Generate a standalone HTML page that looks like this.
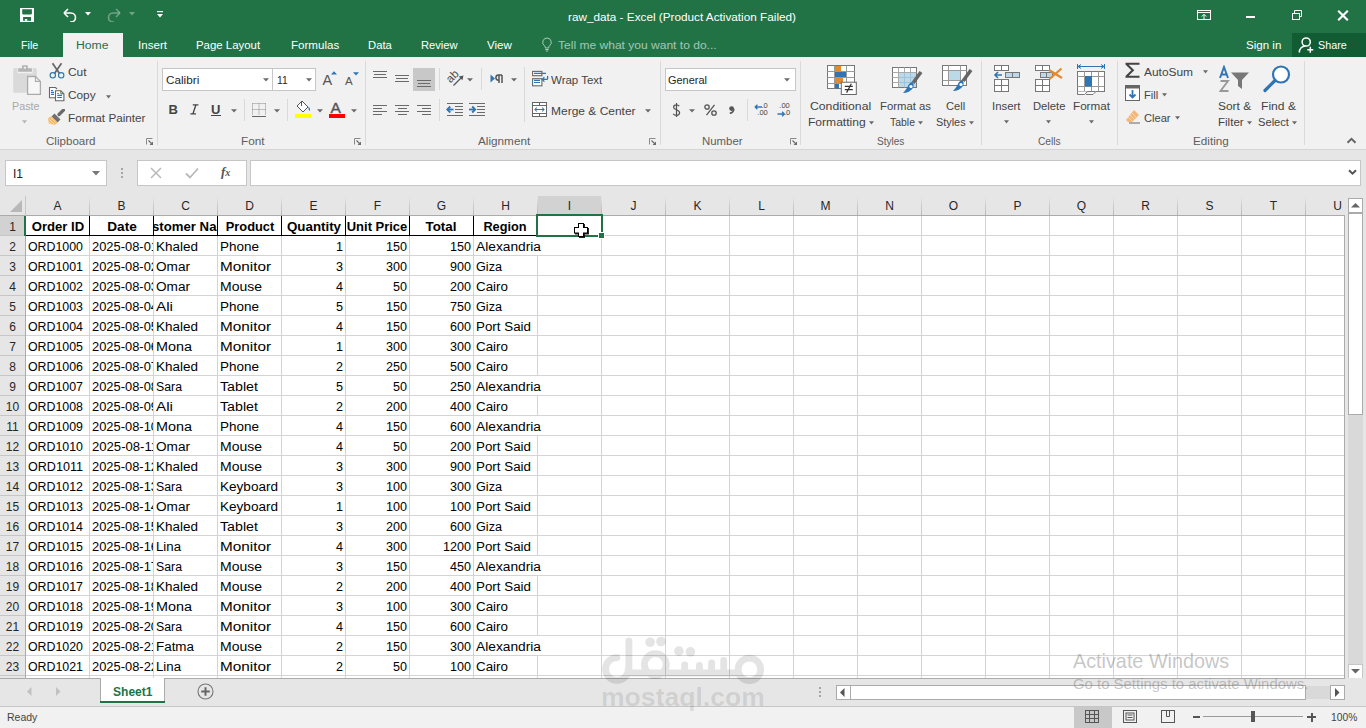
<!DOCTYPE html>
<html><head><meta charset="utf-8"><style>
html,body{margin:0;padding:0;width:1366px;height:728px;overflow:hidden;background:#fff;}
body{position:relative;font-family:"Liberation Sans", sans-serif;}
body>div, body>svg{position:absolute;}
.t{white-space:pre;line-height:1;}
</style></head><body>
<div style="left:0px;top:0px;width:1366px;height:57px;background:#217346"></div>
<svg style="position:absolute;left:20px;top:8px;" width="14" height="14" viewBox="0 0 14 14"><rect x="0" y="0" width="14" height="14" fill="#fff"/><path d="M2.2 1.3h9.7v4.3l-.8.8h-8.1l-.8-.8z" fill="#217346"/><rect x="3.1" y="9" width="7.9" height="3.8" fill="#217346"/><rect x="4.9" y="11" width="2.3" height="1.8" fill="#fff"/></svg>
<svg style="position:absolute;left:62px;top:7px;" width="16" height="15" viewBox="0 0 16 15"><path d="M2 6 L6 2 M2 6 L6 10" stroke="#fff" stroke-width="1.6" fill="none"/><path d="M2.5 6 H9 a4.5 4.5 0 0 1 0 9 h-1" stroke="#fff" stroke-width="1.6" fill="none"/></svg>
<svg style="position:absolute;left:85px;top:12px;" width="7" height="4" viewBox="0 0 7 4"><path d="M0 0h6l-3 3.5z" fill="#fff"/></svg>
<svg style="position:absolute;left:106px;top:7px;" width="16" height="15" viewBox="0 0 16 15"><path d="M14 6 L10 2 M14 6 L10 10" stroke="rgba(255,255,255,.35)" stroke-width="1.6" fill="none"/><path d="M13.5 6 H7 a4.5 4.5 0 0 0 0 9 h1" stroke="rgba(255,255,255,.35)" stroke-width="1.6" fill="none"/></svg>
<svg style="position:absolute;left:129px;top:12px;" width="7" height="4" viewBox="0 0 7 4"><path d="M0 0h6l-3 3.5z" fill="rgba(255,255,255,.35)"/></svg>
<svg style="position:absolute;left:157px;top:11px;" width="7" height="8" viewBox="0 0 7 8"><rect x="0" y="0" width="6" height="1.2" fill="#fff"/><path d="M0 3h6l-3 3.5z" fill="#fff"/></svg>
<div class="t" style="left:567.50px;top:10.65px;font-size:11.75px;color:#fff;font-weight:400;;transform:scaleX(1.0003);transform-origin:left">raw_data - Excel (Product Activation Failed)</div>
<svg style="position:absolute;left:1197px;top:10px;" width="15" height="11" viewBox="0 0 15 11"><rect x="0.5" y="0.5" width="13" height="9" fill="none" stroke="#fff"/><path d="M0.5 2.5h13" stroke="#fff"/><path d="M7 9V4.5 M4.8 6.5 L7 4.3 L9.2 6.5" stroke="#fff" fill="none"/></svg>
<div style="left:1246px;top:16px;width:9px;height:2px;background:#fff"></div>
<svg style="position:absolute;left:1292px;top:10px;" width="11" height="11" viewBox="0 0 11 11"><rect x="0.5" y="3.5" width="7" height="6" fill="none" stroke="#fff"/><path d="M2.5 3.5V0.5h7v6h-2" fill="none" stroke="#fff"/></svg>
<svg style="position:absolute;left:1337px;top:10px;" width="12" height="11" viewBox="0 0 12 11"><path d="M1.2 0.7 L10.8 10.3 M10.8 0.7 L1.2 10.3" stroke="#fff" stroke-width="2.1"/></svg>
<div style="left:63px;top:33px;width:60px;height:24px;background:#f1f1f1"></div>
<div class="t" style="left:20.70px;top:39.30px;font-size:11.7px;color:#fff;font-weight:400;;transform:scaleX(0.9178);transform-origin:left">File</div>
<div class="t" style="left:76.40px;top:39.30px;font-size:11.7px;color:#217346;font-weight:400;;transform:scaleX(1.0443);transform-origin:left">Home</div>
<div class="t" style="left:138.10px;top:39.30px;font-size:11.7px;color:#fff;font-weight:400;;transform:scaleX(0.9911);transform-origin:left">Insert</div>
<div class="t" style="left:196.40px;top:39.30px;font-size:11.7px;color:#fff;font-weight:400;;transform:scaleX(0.9771);transform-origin:left">Page Layout</div>
<div class="t" style="left:290.50px;top:39.30px;font-size:11.7px;color:#fff;font-weight:400;;transform:scaleX(0.9905);transform-origin:left">Formulas</div>
<div class="t" style="left:368.00px;top:39.30px;font-size:11.7px;color:#fff;font-weight:400;;transform:scaleX(0.9627);transform-origin:left">Data</div>
<div class="t" style="left:421.00px;top:39.30px;font-size:11.7px;color:#fff;font-weight:400;;transform:scaleX(0.9557);transform-origin:left">Review</div>
<div class="t" style="left:487.00px;top:39.30px;font-size:11.7px;color:#fff;font-weight:400;;transform:scaleX(0.9889);transform-origin:left">View</div>
<svg style="position:absolute;left:541px;top:37px;" width="12" height="15" viewBox="0 0 12 15"><path d="M6 1a4.3 4.3 0 0 0-2.6 7.7c.6.5.9 1.2.9 2V11h3.4v-.3c0-.8.3-1.5.9-2A4.3 4.3 0 0 0 6 1z" fill="none" stroke="rgba(255,255,255,.6)" stroke-width="1"/><path d="M4.3 12.5h3.4M4.8 14h2.4" stroke="rgba(255,255,255,.6)"/></svg>
<div class="t" style="left:558.00px;top:39.30px;font-size:11.7px;color:rgba(255,255,255,.6);font-weight:400;;transform:scaleX(1.0303);transform-origin:left">Tell me what you want to do...</div>
<div class="t" style="left:1246.00px;top:38.90px;font-size:11.7px;color:#fff;font-weight:400;;transform:scaleX(0.9894);transform-origin:left">Sign in</div>
<div style="left:1292px;top:33px;width:74px;height:24px;background:#125c33"></div>
<svg style="position:absolute;left:1298px;top:36px;" width="17" height="17" viewBox="0 0 17 17"><circle cx="8.2" cy="6" r="4.1" fill="none" stroke="#fff" stroke-width="1.5"/><path d="M1.3 16.5c0-3.8 2.8-6.5 6.3-6.5" fill="none" stroke="#fff" stroke-width="1.5"/><path d="M12.3 10.8v6M9.3 13.8h6" stroke="#fff" stroke-width="1.5"/></svg>
<div class="t" style="left:1318.00px;top:38.90px;font-size:11.7px;color:#fff;font-weight:400;;transform:scaleX(0.9226);transform-origin:left">Share</div>
<div style="left:0px;top:57px;width:1366px;height:92px;background:#f1f1f1"></div>
<div style="left:0px;top:149px;width:1366px;height:1px;background:#d5d5d5"></div>
<div style="left:157px;top:61px;width:1px;height:84px;background:#d9d9d9"></div>
<div style="left:365px;top:61px;width:1px;height:84px;background:#d9d9d9"></div>
<div style="left:660px;top:61px;width:1px;height:84px;background:#d9d9d9"></div>
<div style="left:800px;top:61px;width:1px;height:84px;background:#d9d9d9"></div>
<div style="left:981px;top:61px;width:1px;height:84px;background:#d9d9d9"></div>
<div style="left:1117px;top:61px;width:1px;height:84px;background:#d9d9d9"></div>
<div style="left:1304px;top:61px;width:1px;height:84px;background:#d9d9d9"></div>
<div class="t" style="left:45.60px;top:134.60px;font-size:11.7px;color:#5e5e5e;font-weight:400;;transform:scaleX(0.9905);transform-origin:left">Clipboard</div>
<div class="t" style="left:241.40px;top:134.60px;font-size:11.7px;color:#5e5e5e;font-weight:400;;transform:scaleX(1.0080);transform-origin:left">Font</div>
<div class="t" style="left:478.30px;top:134.60px;font-size:11.7px;color:#5e5e5e;font-weight:400;;transform:scaleX(1.0052);transform-origin:left">Alignment</div>
<div class="t" style="left:702.00px;top:134.60px;font-size:11.7px;color:#5e5e5e;font-weight:400;;transform:scaleX(0.9756);transform-origin:left">Number</div>
<div class="t" style="left:876.80px;top:134.60px;font-size:11.7px;color:#5e5e5e;font-weight:400;;transform:scaleX(0.8600);transform-origin:left">Styles</div>
<div class="t" style="left:1037.60px;top:134.60px;font-size:11.7px;color:#5e5e5e;font-weight:400;;transform:scaleX(0.8728);transform-origin:left">Cells</div>
<div class="t" style="left:1192.50px;top:134.60px;font-size:11.7px;color:#5e5e5e;font-weight:400;;transform:scaleX(1.0034);transform-origin:left">Editing</div>
<svg style="position:absolute;left:146px;top:138px;" width="8" height="8" viewBox="0 0 8 8"><path d="M0.5 6.5V0.5H6.5" fill="none" stroke="#8a8a8a"/><path d="M2.5 2.5L6.5 6.5" stroke="#6a6a6a" stroke-width="1.1"/><path d="M7 3.5V7H3.5z" fill="#6a6a6a"/></svg>
<svg style="position:absolute;left:354px;top:138px;" width="8" height="8" viewBox="0 0 8 8"><path d="M0.5 6.5V0.5H6.5" fill="none" stroke="#8a8a8a"/><path d="M2.5 2.5L6.5 6.5" stroke="#6a6a6a" stroke-width="1.1"/><path d="M7 3.5V7H3.5z" fill="#6a6a6a"/></svg>
<svg style="position:absolute;left:649px;top:138px;" width="8" height="8" viewBox="0 0 8 8"><path d="M0.5 6.5V0.5H6.5" fill="none" stroke="#8a8a8a"/><path d="M2.5 2.5L6.5 6.5" stroke="#6a6a6a" stroke-width="1.1"/><path d="M7 3.5V7H3.5z" fill="#6a6a6a"/></svg>
<svg style="position:absolute;left:790px;top:138px;" width="8" height="8" viewBox="0 0 8 8"><path d="M0.5 6.5V0.5H6.5" fill="none" stroke="#8a8a8a"/><path d="M2.5 2.5L6.5 6.5" stroke="#6a6a6a" stroke-width="1.1"/><path d="M7 3.5V7H3.5z" fill="#6a6a6a"/></svg>
<div style="left:0px;top:150px;width:1366px;height:46px;background:#e6e6e6"></div>
<div style="left:0px;top:196px;width:1345px;height:20px;background:#e6e6e6"></div>
<div style="left:5px;top:160px;width:102px;height:26px;background:#fff;border:1px solid #c6c6c6;box-sizing:border-box"></div>
<div class="t" style="left:13.00px;top:167.84px;font-size:12px;color:#222;font-weight:400;">I1</div>
<svg style="position:absolute;left:92px;top:171px;" width="9" height="5" viewBox="0 0 9 5"><path d="M0 0h8l-4 4.5z" fill="#777"/></svg>
<div style="left:121px;top:168px;width:2px;height:2px;background:#a6a6a6"></div>
<div style="left:121px;top:172px;width:2px;height:2px;background:#a6a6a6"></div>
<div style="left:121px;top:176px;width:2px;height:2px;background:#a6a6a6"></div>
<div style="left:137px;top:160px;width:110px;height:26px;background:#fff;border:1px solid #c6c6c6;box-sizing:border-box"></div>
<svg style="position:absolute;left:150px;top:167px;" width="12" height="12" viewBox="0 0 12 12"><path d="M1 1L11 11M11 1L1 11" stroke="#b9b9b9" stroke-width="1.5"/></svg>
<svg style="position:absolute;left:185px;top:167px;" width="14" height="12" viewBox="0 0 14 12"><path d="M1 6.5L5 10.5L13 1.5" stroke="#b9b9b9" stroke-width="1.8" fill="none"/></svg>
<div class="t" style="left:221px;top:165px;font-size:13px;font-family:'Liberation Serif';font-style:italic;color:#555;font-weight:700">f<span style="font-size:10px">x</span></div>
<div style="left:250px;top:160px;width:1111px;height:26px;background:#fff;border:1px solid #c6c6c6;box-sizing:border-box"></div>
<svg style="position:absolute;left:1348px;top:169px;" width="9" height="7" viewBox="0 0 9 7"><path d="M1 1.2L4.5 4.7L8 1.2" stroke="#555" stroke-width="2" fill="none"/></svg>
<div style="left:0px;top:196px;width:1345px;height:20px;background:#e6e6e6"></div>
<div style="left:0px;top:215px;width:1345px;height:1px;background:#ababab"></div>
<svg style="position:absolute;left:10px;top:200px;" width="13" height="13" viewBox="0 0 13 13"><path d="M12 0V12H0z" fill="#b8b8b8"/></svg>
<div style="left:25px;top:196px;width:1px;height:20px;background:#c6c6c6"></div>
<div style="left:89px;top:196px;width:1px;height:19px;background:linear-gradient(#e6e6e6,#b5b5b5)"></div>
<div class="t" style="left:-242.5px;width:600px;text-align:center;top:199.54px;font-size:12px;color:#262626;font-weight:400;">A</div>
<div style="left:153px;top:196px;width:1px;height:19px;background:linear-gradient(#e6e6e6,#b5b5b5)"></div>
<div class="t" style="left:-178.5px;width:600px;text-align:center;top:199.54px;font-size:12px;color:#262626;font-weight:400;">B</div>
<div style="left:217px;top:196px;width:1px;height:19px;background:linear-gradient(#e6e6e6,#b5b5b5)"></div>
<div class="t" style="left:-114.5px;width:600px;text-align:center;top:199.54px;font-size:12px;color:#262626;font-weight:400;">C</div>
<div style="left:281px;top:196px;width:1px;height:19px;background:linear-gradient(#e6e6e6,#b5b5b5)"></div>
<div class="t" style="left:-50.5px;width:600px;text-align:center;top:199.54px;font-size:12px;color:#262626;font-weight:400;">D</div>
<div style="left:345px;top:196px;width:1px;height:19px;background:linear-gradient(#e6e6e6,#b5b5b5)"></div>
<div class="t" style="left:13.5px;width:600px;text-align:center;top:199.54px;font-size:12px;color:#262626;font-weight:400;">E</div>
<div style="left:409px;top:196px;width:1px;height:19px;background:linear-gradient(#e6e6e6,#b5b5b5)"></div>
<div class="t" style="left:77.5px;width:600px;text-align:center;top:199.54px;font-size:12px;color:#262626;font-weight:400;">F</div>
<div style="left:473px;top:196px;width:1px;height:19px;background:linear-gradient(#e6e6e6,#b5b5b5)"></div>
<div class="t" style="left:141.5px;width:600px;text-align:center;top:199.54px;font-size:12px;color:#262626;font-weight:400;">G</div>
<div style="left:537px;top:196px;width:1px;height:19px;background:linear-gradient(#e6e6e6,#b5b5b5)"></div>
<div class="t" style="left:205.5px;width:600px;text-align:center;top:199.54px;font-size:12px;color:#262626;font-weight:400;">H</div>
<div style="left:538px;top:196px;width:64px;height:19px;background:#d2d2d2"></div>
<div style="left:601px;top:196px;width:1px;height:19px;background:linear-gradient(#e6e6e6,#b5b5b5)"></div>
<div class="t" style="left:269.5px;width:600px;text-align:center;top:199.54px;font-size:12px;color:#262626;font-weight:400;">I</div>
<div style="left:665px;top:196px;width:1px;height:19px;background:linear-gradient(#e6e6e6,#b5b5b5)"></div>
<div class="t" style="left:333.5px;width:600px;text-align:center;top:199.54px;font-size:12px;color:#262626;font-weight:400;">J</div>
<div style="left:729px;top:196px;width:1px;height:19px;background:linear-gradient(#e6e6e6,#b5b5b5)"></div>
<div class="t" style="left:397.5px;width:600px;text-align:center;top:199.54px;font-size:12px;color:#262626;font-weight:400;">K</div>
<div style="left:793px;top:196px;width:1px;height:19px;background:linear-gradient(#e6e6e6,#b5b5b5)"></div>
<div class="t" style="left:461.5px;width:600px;text-align:center;top:199.54px;font-size:12px;color:#262626;font-weight:400;">L</div>
<div style="left:857px;top:196px;width:1px;height:19px;background:linear-gradient(#e6e6e6,#b5b5b5)"></div>
<div class="t" style="left:525.5px;width:600px;text-align:center;top:199.54px;font-size:12px;color:#262626;font-weight:400;">M</div>
<div style="left:921px;top:196px;width:1px;height:19px;background:linear-gradient(#e6e6e6,#b5b5b5)"></div>
<div class="t" style="left:589.5px;width:600px;text-align:center;top:199.54px;font-size:12px;color:#262626;font-weight:400;">N</div>
<div style="left:985px;top:196px;width:1px;height:19px;background:linear-gradient(#e6e6e6,#b5b5b5)"></div>
<div class="t" style="left:653.5px;width:600px;text-align:center;top:199.54px;font-size:12px;color:#262626;font-weight:400;">O</div>
<div style="left:1049px;top:196px;width:1px;height:19px;background:linear-gradient(#e6e6e6,#b5b5b5)"></div>
<div class="t" style="left:717.5px;width:600px;text-align:center;top:199.54px;font-size:12px;color:#262626;font-weight:400;">P</div>
<div style="left:1113px;top:196px;width:1px;height:19px;background:linear-gradient(#e6e6e6,#b5b5b5)"></div>
<div class="t" style="left:781.5px;width:600px;text-align:center;top:199.54px;font-size:12px;color:#262626;font-weight:400;">Q</div>
<div style="left:1177px;top:196px;width:1px;height:19px;background:linear-gradient(#e6e6e6,#b5b5b5)"></div>
<div class="t" style="left:845.5px;width:600px;text-align:center;top:199.54px;font-size:12px;color:#262626;font-weight:400;">R</div>
<div style="left:1241px;top:196px;width:1px;height:19px;background:linear-gradient(#e6e6e6,#b5b5b5)"></div>
<div class="t" style="left:909.5px;width:600px;text-align:center;top:199.54px;font-size:12px;color:#262626;font-weight:400;">S</div>
<div style="left:1305px;top:196px;width:1px;height:19px;background:linear-gradient(#e6e6e6,#b5b5b5)"></div>
<div class="t" style="left:973.5px;width:600px;text-align:center;top:199.54px;font-size:12px;color:#262626;font-weight:400;">T</div>
<div style="left:1369px;top:196px;width:1px;height:19px;background:linear-gradient(#e6e6e6,#b5b5b5)"></div>
<div class="t" style="left:1037.5px;width:600px;text-align:center;top:199.54px;font-size:12px;color:#262626;font-weight:400;">U</div>
<div style="left:0px;top:216px;width:25px;height:462px;background:#e6e6e6"></div>
<div style="left:0px;top:216px;width:25px;height:20px;background:#d2d2d2"></div>
<div style="left:25px;top:216px;width:1px;height:462px;background:#ababab"></div>
<div style="left:0px;top:235px;width:25px;height:1px;background:#c6c6c6"></div>
<div class="t" style="left:-287.5px;width:600px;text-align:center;top:221.14px;font-size:12px;color:#262626;font-weight:400;">1</div>
<div style="left:0px;top:255px;width:25px;height:1px;background:#c6c6c6"></div>
<div class="t" style="left:-287.5px;width:600px;text-align:center;top:241.14px;font-size:12px;color:#262626;font-weight:400;">2</div>
<div style="left:0px;top:275px;width:25px;height:1px;background:#c6c6c6"></div>
<div class="t" style="left:-287.5px;width:600px;text-align:center;top:261.14px;font-size:12px;color:#262626;font-weight:400;">3</div>
<div style="left:0px;top:295px;width:25px;height:1px;background:#c6c6c6"></div>
<div class="t" style="left:-287.5px;width:600px;text-align:center;top:281.14px;font-size:12px;color:#262626;font-weight:400;">4</div>
<div style="left:0px;top:315px;width:25px;height:1px;background:#c6c6c6"></div>
<div class="t" style="left:-287.5px;width:600px;text-align:center;top:301.14px;font-size:12px;color:#262626;font-weight:400;">5</div>
<div style="left:0px;top:335px;width:25px;height:1px;background:#c6c6c6"></div>
<div class="t" style="left:-287.5px;width:600px;text-align:center;top:321.14px;font-size:12px;color:#262626;font-weight:400;">6</div>
<div style="left:0px;top:355px;width:25px;height:1px;background:#c6c6c6"></div>
<div class="t" style="left:-287.5px;width:600px;text-align:center;top:341.14px;font-size:12px;color:#262626;font-weight:400;">7</div>
<div style="left:0px;top:375px;width:25px;height:1px;background:#c6c6c6"></div>
<div class="t" style="left:-287.5px;width:600px;text-align:center;top:361.14px;font-size:12px;color:#262626;font-weight:400;">8</div>
<div style="left:0px;top:395px;width:25px;height:1px;background:#c6c6c6"></div>
<div class="t" style="left:-287.5px;width:600px;text-align:center;top:381.14px;font-size:12px;color:#262626;font-weight:400;">9</div>
<div style="left:0px;top:415px;width:25px;height:1px;background:#c6c6c6"></div>
<div class="t" style="left:-287.5px;width:600px;text-align:center;top:401.14px;font-size:12px;color:#262626;font-weight:400;">10</div>
<div style="left:0px;top:435px;width:25px;height:1px;background:#c6c6c6"></div>
<div class="t" style="left:-287.5px;width:600px;text-align:center;top:421.14px;font-size:12px;color:#262626;font-weight:400;">11</div>
<div style="left:0px;top:455px;width:25px;height:1px;background:#c6c6c6"></div>
<div class="t" style="left:-287.5px;width:600px;text-align:center;top:441.14px;font-size:12px;color:#262626;font-weight:400;">12</div>
<div style="left:0px;top:475px;width:25px;height:1px;background:#c6c6c6"></div>
<div class="t" style="left:-287.5px;width:600px;text-align:center;top:461.14px;font-size:12px;color:#262626;font-weight:400;">13</div>
<div style="left:0px;top:495px;width:25px;height:1px;background:#c6c6c6"></div>
<div class="t" style="left:-287.5px;width:600px;text-align:center;top:481.14px;font-size:12px;color:#262626;font-weight:400;">14</div>
<div style="left:0px;top:515px;width:25px;height:1px;background:#c6c6c6"></div>
<div class="t" style="left:-287.5px;width:600px;text-align:center;top:501.14px;font-size:12px;color:#262626;font-weight:400;">15</div>
<div style="left:0px;top:535px;width:25px;height:1px;background:#c6c6c6"></div>
<div class="t" style="left:-287.5px;width:600px;text-align:center;top:521.14px;font-size:12px;color:#262626;font-weight:400;">16</div>
<div style="left:0px;top:555px;width:25px;height:1px;background:#c6c6c6"></div>
<div class="t" style="left:-287.5px;width:600px;text-align:center;top:541.14px;font-size:12px;color:#262626;font-weight:400;">17</div>
<div style="left:0px;top:575px;width:25px;height:1px;background:#c6c6c6"></div>
<div class="t" style="left:-287.5px;width:600px;text-align:center;top:561.14px;font-size:12px;color:#262626;font-weight:400;">18</div>
<div style="left:0px;top:595px;width:25px;height:1px;background:#c6c6c6"></div>
<div class="t" style="left:-287.5px;width:600px;text-align:center;top:581.14px;font-size:12px;color:#262626;font-weight:400;">19</div>
<div style="left:0px;top:615px;width:25px;height:1px;background:#c6c6c6"></div>
<div class="t" style="left:-287.5px;width:600px;text-align:center;top:601.14px;font-size:12px;color:#262626;font-weight:400;">20</div>
<div style="left:0px;top:635px;width:25px;height:1px;background:#c6c6c6"></div>
<div class="t" style="left:-287.5px;width:600px;text-align:center;top:621.14px;font-size:12px;color:#262626;font-weight:400;">21</div>
<div style="left:0px;top:655px;width:25px;height:1px;background:#c6c6c6"></div>
<div class="t" style="left:-287.5px;width:600px;text-align:center;top:641.14px;font-size:12px;color:#262626;font-weight:400;">22</div>
<div style="left:0px;top:675px;width:25px;height:1px;background:#c6c6c6"></div>
<div class="t" style="left:-287.5px;width:600px;text-align:center;top:661.14px;font-size:12px;color:#262626;font-weight:400;">23</div>
<div style="left:0px;top:695px;width:25px;height:1px;background:#c6c6c6"></div>
<div style="left:26px;top:216px;width:1319px;height:462px;background:#fff"></div>
<div style="left:89px;top:216px;width:1px;height:462px;background:#d4d4d4"></div>
<div style="left:153px;top:216px;width:1px;height:462px;background:#d4d4d4"></div>
<div style="left:217px;top:216px;width:1px;height:462px;background:#d4d4d4"></div>
<div style="left:281px;top:216px;width:1px;height:462px;background:#d4d4d4"></div>
<div style="left:345px;top:216px;width:1px;height:462px;background:#d4d4d4"></div>
<div style="left:409px;top:216px;width:1px;height:462px;background:#d4d4d4"></div>
<div style="left:473px;top:216px;width:1px;height:462px;background:#d4d4d4"></div>
<div style="left:537px;top:216px;width:1px;height:462px;background:#d4d4d4"></div>
<div style="left:601px;top:216px;width:1px;height:462px;background:#d4d4d4"></div>
<div style="left:665px;top:216px;width:1px;height:462px;background:#d4d4d4"></div>
<div style="left:729px;top:216px;width:1px;height:462px;background:#d4d4d4"></div>
<div style="left:793px;top:216px;width:1px;height:462px;background:#d4d4d4"></div>
<div style="left:857px;top:216px;width:1px;height:462px;background:#d4d4d4"></div>
<div style="left:921px;top:216px;width:1px;height:462px;background:#d4d4d4"></div>
<div style="left:985px;top:216px;width:1px;height:462px;background:#d4d4d4"></div>
<div style="left:1049px;top:216px;width:1px;height:462px;background:#d4d4d4"></div>
<div style="left:1113px;top:216px;width:1px;height:462px;background:#d4d4d4"></div>
<div style="left:1177px;top:216px;width:1px;height:462px;background:#d4d4d4"></div>
<div style="left:1241px;top:216px;width:1px;height:462px;background:#d4d4d4"></div>
<div style="left:1305px;top:216px;width:1px;height:462px;background:#d4d4d4"></div>
<div style="left:26px;top:235px;width:1319px;height:1px;background:#d4d4d4"></div>
<div style="left:26px;top:255px;width:1319px;height:1px;background:#d4d4d4"></div>
<div style="left:26px;top:275px;width:1319px;height:1px;background:#d4d4d4"></div>
<div style="left:26px;top:295px;width:1319px;height:1px;background:#d4d4d4"></div>
<div style="left:26px;top:315px;width:1319px;height:1px;background:#d4d4d4"></div>
<div style="left:26px;top:335px;width:1319px;height:1px;background:#d4d4d4"></div>
<div style="left:26px;top:355px;width:1319px;height:1px;background:#d4d4d4"></div>
<div style="left:26px;top:375px;width:1319px;height:1px;background:#d4d4d4"></div>
<div style="left:26px;top:395px;width:1319px;height:1px;background:#d4d4d4"></div>
<div style="left:26px;top:415px;width:1319px;height:1px;background:#d4d4d4"></div>
<div style="left:26px;top:435px;width:1319px;height:1px;background:#d4d4d4"></div>
<div style="left:26px;top:455px;width:1319px;height:1px;background:#d4d4d4"></div>
<div style="left:26px;top:475px;width:1319px;height:1px;background:#d4d4d4"></div>
<div style="left:26px;top:495px;width:1319px;height:1px;background:#d4d4d4"></div>
<div style="left:26px;top:515px;width:1319px;height:1px;background:#d4d4d4"></div>
<div style="left:26px;top:535px;width:1319px;height:1px;background:#d4d4d4"></div>
<div style="left:26px;top:555px;width:1319px;height:1px;background:#d4d4d4"></div>
<div style="left:26px;top:575px;width:1319px;height:1px;background:#d4d4d4"></div>
<div style="left:26px;top:595px;width:1319px;height:1px;background:#d4d4d4"></div>
<div style="left:26px;top:615px;width:1319px;height:1px;background:#d4d4d4"></div>
<div style="left:26px;top:635px;width:1319px;height:1px;background:#d4d4d4"></div>
<div style="left:26px;top:655px;width:1319px;height:1px;background:#d4d4d4"></div>
<div style="left:26px;top:675px;width:1319px;height:1px;background:#d4d4d4"></div>
<div style="position:absolute;left:26px;top:216px;width:63px;height:19px;overflow:hidden;"><div class="t" style="position:absolute;left:-117.75px;width:300px;text-align:center;top:4.30px;font-size:13px;color:#000;font-weight:700;transform:scaleX(1.0094)">Order ID</div></div>
<div style="position:absolute;left:90px;top:216px;width:63px;height:19px;overflow:hidden;"><div class="t" style="position:absolute;left:-118.5px;width:300px;text-align:center;top:4.30px;font-size:13px;color:#000;font-weight:700;transform:scaleX(1.0469)">Date</div></div>
<div style="position:absolute;left:154px;top:216px;width:63px;height:19px;overflow:hidden;"><div class="t" style="position:absolute;left:-118.69999999999999px;width:300px;text-align:center;top:4.30px;font-size:13px;color:#000;font-weight:700;transform:scaleX(1.0131)">Customer Name</div></div>
<div style="position:absolute;left:218px;top:216px;width:63px;height:19px;overflow:hidden;"><div class="t" style="position:absolute;left:-117.80000000000001px;width:300px;text-align:center;top:4.30px;font-size:13px;color:#000;font-weight:700;transform:scaleX(0.9875)">Product</div></div>
<div style="position:absolute;left:282px;top:216px;width:63px;height:19px;overflow:hidden;"><div class="t" style="position:absolute;left:-117.89999999999998px;width:300px;text-align:center;top:4.30px;font-size:13px;color:#000;font-weight:700;transform:scaleX(1.0242)">Quantity</div></div>
<div style="position:absolute;left:346px;top:216px;width:63px;height:19px;overflow:hidden;"><div class="t" style="position:absolute;left:-118.80000000000001px;width:300px;text-align:center;top:4.30px;font-size:13px;color:#000;font-weight:700;transform:scaleX(0.9970)">Unit Price</div></div>
<div style="position:absolute;left:410px;top:216px;width:63px;height:19px;overflow:hidden;"><div class="t" style="position:absolute;left:-118.80000000000001px;width:300px;text-align:center;top:4.30px;font-size:13px;color:#000;font-weight:700;transform:scaleX(1.0303)">Total</div></div>
<div style="position:absolute;left:474px;top:216px;width:63px;height:19px;overflow:hidden;"><div class="t" style="position:absolute;left:-118.60000000000002px;width:300px;text-align:center;top:4.30px;font-size:13px;color:#000;font-weight:700;transform:scaleX(0.9806)">Region</div></div>
<div style="left:25px;top:216px;width:1px;height:20px;background:#000"></div>
<div style="left:89px;top:216px;width:1px;height:20px;background:#000"></div>
<div style="left:153px;top:216px;width:1px;height:20px;background:#000"></div>
<div style="left:217px;top:216px;width:1px;height:20px;background:#000"></div>
<div style="left:281px;top:216px;width:1px;height:20px;background:#000"></div>
<div style="left:345px;top:216px;width:1px;height:20px;background:#000"></div>
<div style="left:409px;top:216px;width:1px;height:20px;background:#000"></div>
<div style="left:473px;top:216px;width:1px;height:20px;background:#000"></div>
<div style="left:537px;top:216px;width:1px;height:20px;background:#000"></div>
<div style="left:26px;top:235px;width:511px;height:1px;background:#000"></div>
<div class="t" style="left:28.00px;top:240.72px;font-size:12.5px;color:#000;font-weight:400;transform:scaleX(0.9895);transform-origin:left">ORD1000</div>
<div style="position:absolute;left:90px;top:236px;width:63px;height:19px;overflow:hidden;"><div class="t" style="position:absolute;left:2.3px;top:4.72px;font-size:12.5px;color:#000;transform:scaleX(1.0322);transform-origin:left">2025-08-01</div></div>
<div class="t" style="left:156.00px;top:240.72px;font-size:12.5px;color:#000;font-weight:400;transform:scaleX(1.0791);transform-origin:left">Khaled</div>
<div class="t" style="left:220.00px;top:240.72px;font-size:12.5px;color:#000;font-weight:400;transform:scaleX(1.0790);transform-origin:left">Phone</div>
<div class="t" style="left:-257px;width:600px;text-align:right;top:240.72px;font-size:12.5px;color:#000;font-weight:400;transform:scaleX(1.0069);transform-origin:right">1</div>
<div class="t" style="left:-193px;width:600px;text-align:right;top:240.72px;font-size:12.5px;color:#000;font-weight:400;transform:scaleX(1.0069);transform-origin:right">150</div>
<div class="t" style="left:-129px;width:600px;text-align:right;top:240.72px;font-size:12.5px;color:#000;font-weight:400;transform:scaleX(1.0069);transform-origin:right">150</div>
<div style="left:537px;top:236px;width:1px;height:19px;background:#fff"></div>
<div class="t" style="left:476.00px;top:240.72px;font-size:12.5px;color:#000;font-weight:400;transform:scaleX(1.1005);transform-origin:left">Alexandria</div>
<div class="t" style="left:28.00px;top:260.72px;font-size:12.5px;color:#000;font-weight:400;transform:scaleX(0.9895);transform-origin:left">ORD1001</div>
<div style="position:absolute;left:90px;top:256px;width:63px;height:19px;overflow:hidden;"><div class="t" style="position:absolute;left:2.3px;top:4.72px;font-size:12.5px;color:#000;transform:scaleX(1.0322);transform-origin:left">2025-08-02</div></div>
<div class="t" style="left:156.00px;top:260.72px;font-size:12.5px;color:#000;font-weight:400;transform:scaleX(1.0880);transform-origin:left">Omar</div>
<div class="t" style="left:220.00px;top:260.72px;font-size:12.5px;color:#000;font-weight:400;transform:scaleX(1.2236);transform-origin:left">Monitor</div>
<div class="t" style="left:-257px;width:600px;text-align:right;top:260.72px;font-size:12.5px;color:#000;font-weight:400;transform:scaleX(1.0069);transform-origin:right">3</div>
<div class="t" style="left:-193px;width:600px;text-align:right;top:260.72px;font-size:12.5px;color:#000;font-weight:400;transform:scaleX(1.0069);transform-origin:right">300</div>
<div class="t" style="left:-129px;width:600px;text-align:right;top:260.72px;font-size:12.5px;color:#000;font-weight:400;transform:scaleX(1.0069);transform-origin:right">900</div>
<div class="t" style="left:476.00px;top:260.72px;font-size:12.5px;color:#000;font-weight:400;transform:scaleX(1.0116);transform-origin:left">Giza</div>
<div class="t" style="left:28.00px;top:280.72px;font-size:12.5px;color:#000;font-weight:400;transform:scaleX(0.9895);transform-origin:left">ORD1002</div>
<div style="position:absolute;left:90px;top:276px;width:63px;height:19px;overflow:hidden;"><div class="t" style="position:absolute;left:2.3px;top:4.72px;font-size:12.5px;color:#000;transform:scaleX(1.0322);transform-origin:left">2025-08-03</div></div>
<div class="t" style="left:156.00px;top:280.72px;font-size:12.5px;color:#000;font-weight:400;transform:scaleX(1.0880);transform-origin:left">Omar</div>
<div class="t" style="left:220.00px;top:280.72px;font-size:12.5px;color:#000;font-weight:400;transform:scaleX(1.1194);transform-origin:left">Mouse</div>
<div class="t" style="left:-257px;width:600px;text-align:right;top:280.72px;font-size:12.5px;color:#000;font-weight:400;transform:scaleX(1.0069);transform-origin:right">4</div>
<div class="t" style="left:-193px;width:600px;text-align:right;top:280.72px;font-size:12.5px;color:#000;font-weight:400;transform:scaleX(1.0069);transform-origin:right">50</div>
<div class="t" style="left:-129px;width:600px;text-align:right;top:280.72px;font-size:12.5px;color:#000;font-weight:400;transform:scaleX(1.0069);transform-origin:right">200</div>
<div class="t" style="left:476.00px;top:280.72px;font-size:12.5px;color:#000;font-weight:400;transform:scaleX(1.0713);transform-origin:left">Cairo</div>
<div class="t" style="left:28.00px;top:300.72px;font-size:12.5px;color:#000;font-weight:400;transform:scaleX(0.9895);transform-origin:left">ORD1003</div>
<div style="position:absolute;left:90px;top:296px;width:63px;height:19px;overflow:hidden;"><div class="t" style="position:absolute;left:2.3px;top:4.72px;font-size:12.5px;color:#000;transform:scaleX(1.0322);transform-origin:left">2025-08-04</div></div>
<div class="t" style="left:156.00px;top:300.72px;font-size:12.5px;color:#000;font-weight:400;transform:scaleX(1.2237);transform-origin:left">Ali</div>
<div class="t" style="left:220.00px;top:300.72px;font-size:12.5px;color:#000;font-weight:400;transform:scaleX(1.0790);transform-origin:left">Phone</div>
<div class="t" style="left:-257px;width:600px;text-align:right;top:300.72px;font-size:12.5px;color:#000;font-weight:400;transform:scaleX(1.0069);transform-origin:right">5</div>
<div class="t" style="left:-193px;width:600px;text-align:right;top:300.72px;font-size:12.5px;color:#000;font-weight:400;transform:scaleX(1.0069);transform-origin:right">150</div>
<div class="t" style="left:-129px;width:600px;text-align:right;top:300.72px;font-size:12.5px;color:#000;font-weight:400;transform:scaleX(1.0069);transform-origin:right">750</div>
<div class="t" style="left:476.00px;top:300.72px;font-size:12.5px;color:#000;font-weight:400;transform:scaleX(1.0116);transform-origin:left">Giza</div>
<div class="t" style="left:28.00px;top:320.72px;font-size:12.5px;color:#000;font-weight:400;transform:scaleX(0.9895);transform-origin:left">ORD1004</div>
<div style="position:absolute;left:90px;top:316px;width:63px;height:19px;overflow:hidden;"><div class="t" style="position:absolute;left:2.3px;top:4.72px;font-size:12.5px;color:#000;transform:scaleX(1.0322);transform-origin:left">2025-08-05</div></div>
<div class="t" style="left:156.00px;top:320.72px;font-size:12.5px;color:#000;font-weight:400;transform:scaleX(1.0791);transform-origin:left">Khaled</div>
<div class="t" style="left:220.00px;top:320.72px;font-size:12.5px;color:#000;font-weight:400;transform:scaleX(1.2236);transform-origin:left">Monitor</div>
<div class="t" style="left:-257px;width:600px;text-align:right;top:320.72px;font-size:12.5px;color:#000;font-weight:400;transform:scaleX(1.0069);transform-origin:right">4</div>
<div class="t" style="left:-193px;width:600px;text-align:right;top:320.72px;font-size:12.5px;color:#000;font-weight:400;transform:scaleX(1.0069);transform-origin:right">150</div>
<div class="t" style="left:-129px;width:600px;text-align:right;top:320.72px;font-size:12.5px;color:#000;font-weight:400;transform:scaleX(1.0069);transform-origin:right">600</div>
<div class="t" style="left:476.00px;top:320.72px;font-size:12.5px;color:#000;font-weight:400;transform:scaleX(1.0697);transform-origin:left">Port Said</div>
<div class="t" style="left:28.00px;top:340.72px;font-size:12.5px;color:#000;font-weight:400;transform:scaleX(0.9895);transform-origin:left">ORD1005</div>
<div style="position:absolute;left:90px;top:336px;width:63px;height:19px;overflow:hidden;"><div class="t" style="position:absolute;left:2.3px;top:4.72px;font-size:12.5px;color:#000;transform:scaleX(1.0322);transform-origin:left">2025-08-06</div></div>
<div class="t" style="left:156.00px;top:340.72px;font-size:12.5px;color:#000;font-weight:400;transform:scaleX(1.1513);transform-origin:left">Mona</div>
<div class="t" style="left:220.00px;top:340.72px;font-size:12.5px;color:#000;font-weight:400;transform:scaleX(1.2236);transform-origin:left">Monitor</div>
<div class="t" style="left:-257px;width:600px;text-align:right;top:340.72px;font-size:12.5px;color:#000;font-weight:400;transform:scaleX(1.0069);transform-origin:right">1</div>
<div class="t" style="left:-193px;width:600px;text-align:right;top:340.72px;font-size:12.5px;color:#000;font-weight:400;transform:scaleX(1.0069);transform-origin:right">300</div>
<div class="t" style="left:-129px;width:600px;text-align:right;top:340.72px;font-size:12.5px;color:#000;font-weight:400;transform:scaleX(1.0069);transform-origin:right">300</div>
<div class="t" style="left:476.00px;top:340.72px;font-size:12.5px;color:#000;font-weight:400;transform:scaleX(1.0713);transform-origin:left">Cairo</div>
<div class="t" style="left:28.00px;top:360.72px;font-size:12.5px;color:#000;font-weight:400;transform:scaleX(0.9895);transform-origin:left">ORD1006</div>
<div style="position:absolute;left:90px;top:356px;width:63px;height:19px;overflow:hidden;"><div class="t" style="position:absolute;left:2.3px;top:4.72px;font-size:12.5px;color:#000;transform:scaleX(1.0322);transform-origin:left">2025-08-07</div></div>
<div class="t" style="left:156.00px;top:360.72px;font-size:12.5px;color:#000;font-weight:400;transform:scaleX(1.0791);transform-origin:left">Khaled</div>
<div class="t" style="left:220.00px;top:360.72px;font-size:12.5px;color:#000;font-weight:400;transform:scaleX(1.0790);transform-origin:left">Phone</div>
<div class="t" style="left:-257px;width:600px;text-align:right;top:360.72px;font-size:12.5px;color:#000;font-weight:400;transform:scaleX(1.0069);transform-origin:right">2</div>
<div class="t" style="left:-193px;width:600px;text-align:right;top:360.72px;font-size:12.5px;color:#000;font-weight:400;transform:scaleX(1.0069);transform-origin:right">250</div>
<div class="t" style="left:-129px;width:600px;text-align:right;top:360.72px;font-size:12.5px;color:#000;font-weight:400;transform:scaleX(1.0069);transform-origin:right">500</div>
<div class="t" style="left:476.00px;top:360.72px;font-size:12.5px;color:#000;font-weight:400;transform:scaleX(1.0713);transform-origin:left">Cairo</div>
<div class="t" style="left:28.00px;top:380.72px;font-size:12.5px;color:#000;font-weight:400;transform:scaleX(0.9895);transform-origin:left">ORD1007</div>
<div style="position:absolute;left:90px;top:376px;width:63px;height:19px;overflow:hidden;"><div class="t" style="position:absolute;left:2.3px;top:4.72px;font-size:12.5px;color:#000;transform:scaleX(1.0322);transform-origin:left">2025-08-08</div></div>
<div class="t" style="left:156.00px;top:380.72px;font-size:12.5px;color:#000;font-weight:400;transform:scaleX(0.9847);transform-origin:left">Sara</div>
<div class="t" style="left:220.00px;top:380.72px;font-size:12.5px;color:#000;font-weight:400;transform:scaleX(1.1392);transform-origin:left">Tablet</div>
<div class="t" style="left:-257px;width:600px;text-align:right;top:380.72px;font-size:12.5px;color:#000;font-weight:400;transform:scaleX(1.0069);transform-origin:right">5</div>
<div class="t" style="left:-193px;width:600px;text-align:right;top:380.72px;font-size:12.5px;color:#000;font-weight:400;transform:scaleX(1.0069);transform-origin:right">50</div>
<div class="t" style="left:-129px;width:600px;text-align:right;top:380.72px;font-size:12.5px;color:#000;font-weight:400;transform:scaleX(1.0069);transform-origin:right">250</div>
<div style="left:537px;top:376px;width:1px;height:19px;background:#fff"></div>
<div class="t" style="left:476.00px;top:380.72px;font-size:12.5px;color:#000;font-weight:400;transform:scaleX(1.1005);transform-origin:left">Alexandria</div>
<div class="t" style="left:28.00px;top:400.72px;font-size:12.5px;color:#000;font-weight:400;transform:scaleX(0.9895);transform-origin:left">ORD1008</div>
<div style="position:absolute;left:90px;top:396px;width:63px;height:19px;overflow:hidden;"><div class="t" style="position:absolute;left:2.3px;top:4.72px;font-size:12.5px;color:#000;transform:scaleX(1.0322);transform-origin:left">2025-08-09</div></div>
<div class="t" style="left:156.00px;top:400.72px;font-size:12.5px;color:#000;font-weight:400;transform:scaleX(1.2237);transform-origin:left">Ali</div>
<div class="t" style="left:220.00px;top:400.72px;font-size:12.5px;color:#000;font-weight:400;transform:scaleX(1.1392);transform-origin:left">Tablet</div>
<div class="t" style="left:-257px;width:600px;text-align:right;top:400.72px;font-size:12.5px;color:#000;font-weight:400;transform:scaleX(1.0069);transform-origin:right">2</div>
<div class="t" style="left:-193px;width:600px;text-align:right;top:400.72px;font-size:12.5px;color:#000;font-weight:400;transform:scaleX(1.0069);transform-origin:right">200</div>
<div class="t" style="left:-129px;width:600px;text-align:right;top:400.72px;font-size:12.5px;color:#000;font-weight:400;transform:scaleX(1.0069);transform-origin:right">400</div>
<div class="t" style="left:476.00px;top:400.72px;font-size:12.5px;color:#000;font-weight:400;transform:scaleX(1.0713);transform-origin:left">Cairo</div>
<div class="t" style="left:28.00px;top:420.72px;font-size:12.5px;color:#000;font-weight:400;transform:scaleX(0.9895);transform-origin:left">ORD1009</div>
<div style="position:absolute;left:90px;top:416px;width:63px;height:19px;overflow:hidden;"><div class="t" style="position:absolute;left:2.3px;top:4.72px;font-size:12.5px;color:#000;transform:scaleX(1.0322);transform-origin:left">2025-08-10</div></div>
<div class="t" style="left:156.00px;top:420.72px;font-size:12.5px;color:#000;font-weight:400;transform:scaleX(1.1513);transform-origin:left">Mona</div>
<div class="t" style="left:220.00px;top:420.72px;font-size:12.5px;color:#000;font-weight:400;transform:scaleX(1.0790);transform-origin:left">Phone</div>
<div class="t" style="left:-257px;width:600px;text-align:right;top:420.72px;font-size:12.5px;color:#000;font-weight:400;transform:scaleX(1.0069);transform-origin:right">4</div>
<div class="t" style="left:-193px;width:600px;text-align:right;top:420.72px;font-size:12.5px;color:#000;font-weight:400;transform:scaleX(1.0069);transform-origin:right">150</div>
<div class="t" style="left:-129px;width:600px;text-align:right;top:420.72px;font-size:12.5px;color:#000;font-weight:400;transform:scaleX(1.0069);transform-origin:right">600</div>
<div style="left:537px;top:416px;width:1px;height:19px;background:#fff"></div>
<div class="t" style="left:476.00px;top:420.72px;font-size:12.5px;color:#000;font-weight:400;transform:scaleX(1.1005);transform-origin:left">Alexandria</div>
<div class="t" style="left:28.00px;top:440.72px;font-size:12.5px;color:#000;font-weight:400;transform:scaleX(0.9895);transform-origin:left">ORD1010</div>
<div style="position:absolute;left:90px;top:436px;width:63px;height:19px;overflow:hidden;"><div class="t" style="position:absolute;left:2.3px;top:4.72px;font-size:12.5px;color:#000;transform:scaleX(1.0474);transform-origin:left">2025-08-11</div></div>
<div class="t" style="left:156.00px;top:440.72px;font-size:12.5px;color:#000;font-weight:400;transform:scaleX(1.0880);transform-origin:left">Omar</div>
<div class="t" style="left:220.00px;top:440.72px;font-size:12.5px;color:#000;font-weight:400;transform:scaleX(1.1194);transform-origin:left">Mouse</div>
<div class="t" style="left:-257px;width:600px;text-align:right;top:440.72px;font-size:12.5px;color:#000;font-weight:400;transform:scaleX(1.0069);transform-origin:right">4</div>
<div class="t" style="left:-193px;width:600px;text-align:right;top:440.72px;font-size:12.5px;color:#000;font-weight:400;transform:scaleX(1.0069);transform-origin:right">50</div>
<div class="t" style="left:-129px;width:600px;text-align:right;top:440.72px;font-size:12.5px;color:#000;font-weight:400;transform:scaleX(1.0069);transform-origin:right">200</div>
<div class="t" style="left:476.00px;top:440.72px;font-size:12.5px;color:#000;font-weight:400;transform:scaleX(1.0697);transform-origin:left">Port Said</div>
<div class="t" style="left:28.00px;top:460.72px;font-size:12.5px;color:#000;font-weight:400;transform:scaleX(1.0063);transform-origin:left">ORD1011</div>
<div style="position:absolute;left:90px;top:456px;width:63px;height:19px;overflow:hidden;"><div class="t" style="position:absolute;left:2.3px;top:4.72px;font-size:12.5px;color:#000;transform:scaleX(1.0322);transform-origin:left">2025-08-12</div></div>
<div class="t" style="left:156.00px;top:460.72px;font-size:12.5px;color:#000;font-weight:400;transform:scaleX(1.0791);transform-origin:left">Khaled</div>
<div class="t" style="left:220.00px;top:460.72px;font-size:12.5px;color:#000;font-weight:400;transform:scaleX(1.1194);transform-origin:left">Mouse</div>
<div class="t" style="left:-257px;width:600px;text-align:right;top:460.72px;font-size:12.5px;color:#000;font-weight:400;transform:scaleX(1.0069);transform-origin:right">3</div>
<div class="t" style="left:-193px;width:600px;text-align:right;top:460.72px;font-size:12.5px;color:#000;font-weight:400;transform:scaleX(1.0069);transform-origin:right">300</div>
<div class="t" style="left:-129px;width:600px;text-align:right;top:460.72px;font-size:12.5px;color:#000;font-weight:400;transform:scaleX(1.0069);transform-origin:right">900</div>
<div class="t" style="left:476.00px;top:460.72px;font-size:12.5px;color:#000;font-weight:400;transform:scaleX(1.0697);transform-origin:left">Port Said</div>
<div class="t" style="left:28.00px;top:480.72px;font-size:12.5px;color:#000;font-weight:400;transform:scaleX(0.9895);transform-origin:left">ORD1012</div>
<div style="position:absolute;left:90px;top:476px;width:63px;height:19px;overflow:hidden;"><div class="t" style="position:absolute;left:2.3px;top:4.72px;font-size:12.5px;color:#000;transform:scaleX(1.0322);transform-origin:left">2025-08-13</div></div>
<div class="t" style="left:156.00px;top:480.72px;font-size:12.5px;color:#000;font-weight:400;transform:scaleX(0.9847);transform-origin:left">Sara</div>
<div class="t" style="left:220.00px;top:480.72px;font-size:12.5px;color:#000;font-weight:400;transform:scaleX(1.0839);transform-origin:left">Keyboard</div>
<div class="t" style="left:-257px;width:600px;text-align:right;top:480.72px;font-size:12.5px;color:#000;font-weight:400;transform:scaleX(1.0069);transform-origin:right">3</div>
<div class="t" style="left:-193px;width:600px;text-align:right;top:480.72px;font-size:12.5px;color:#000;font-weight:400;transform:scaleX(1.0069);transform-origin:right">100</div>
<div class="t" style="left:-129px;width:600px;text-align:right;top:480.72px;font-size:12.5px;color:#000;font-weight:400;transform:scaleX(1.0069);transform-origin:right">300</div>
<div class="t" style="left:476.00px;top:480.72px;font-size:12.5px;color:#000;font-weight:400;transform:scaleX(1.0116);transform-origin:left">Giza</div>
<div class="t" style="left:28.00px;top:500.72px;font-size:12.5px;color:#000;font-weight:400;transform:scaleX(0.9895);transform-origin:left">ORD1013</div>
<div style="position:absolute;left:90px;top:496px;width:63px;height:19px;overflow:hidden;"><div class="t" style="position:absolute;left:2.3px;top:4.72px;font-size:12.5px;color:#000;transform:scaleX(1.0322);transform-origin:left">2025-08-14</div></div>
<div class="t" style="left:156.00px;top:500.72px;font-size:12.5px;color:#000;font-weight:400;transform:scaleX(1.0880);transform-origin:left">Omar</div>
<div class="t" style="left:220.00px;top:500.72px;font-size:12.5px;color:#000;font-weight:400;transform:scaleX(1.0839);transform-origin:left">Keyboard</div>
<div class="t" style="left:-257px;width:600px;text-align:right;top:500.72px;font-size:12.5px;color:#000;font-weight:400;transform:scaleX(1.0069);transform-origin:right">1</div>
<div class="t" style="left:-193px;width:600px;text-align:right;top:500.72px;font-size:12.5px;color:#000;font-weight:400;transform:scaleX(1.0069);transform-origin:right">100</div>
<div class="t" style="left:-129px;width:600px;text-align:right;top:500.72px;font-size:12.5px;color:#000;font-weight:400;transform:scaleX(1.0069);transform-origin:right">100</div>
<div class="t" style="left:476.00px;top:500.72px;font-size:12.5px;color:#000;font-weight:400;transform:scaleX(1.0697);transform-origin:left">Port Said</div>
<div class="t" style="left:28.00px;top:520.72px;font-size:12.5px;color:#000;font-weight:400;transform:scaleX(0.9895);transform-origin:left">ORD1014</div>
<div style="position:absolute;left:90px;top:516px;width:63px;height:19px;overflow:hidden;"><div class="t" style="position:absolute;left:2.3px;top:4.72px;font-size:12.5px;color:#000;transform:scaleX(1.0322);transform-origin:left">2025-08-15</div></div>
<div class="t" style="left:156.00px;top:520.72px;font-size:12.5px;color:#000;font-weight:400;transform:scaleX(1.0791);transform-origin:left">Khaled</div>
<div class="t" style="left:220.00px;top:520.72px;font-size:12.5px;color:#000;font-weight:400;transform:scaleX(1.1392);transform-origin:left">Tablet</div>
<div class="t" style="left:-257px;width:600px;text-align:right;top:520.72px;font-size:12.5px;color:#000;font-weight:400;transform:scaleX(1.0069);transform-origin:right">3</div>
<div class="t" style="left:-193px;width:600px;text-align:right;top:520.72px;font-size:12.5px;color:#000;font-weight:400;transform:scaleX(1.0069);transform-origin:right">200</div>
<div class="t" style="left:-129px;width:600px;text-align:right;top:520.72px;font-size:12.5px;color:#000;font-weight:400;transform:scaleX(1.0069);transform-origin:right">600</div>
<div class="t" style="left:476.00px;top:520.72px;font-size:12.5px;color:#000;font-weight:400;transform:scaleX(1.0116);transform-origin:left">Giza</div>
<div class="t" style="left:28.00px;top:540.72px;font-size:12.5px;color:#000;font-weight:400;transform:scaleX(0.9895);transform-origin:left">ORD1015</div>
<div style="position:absolute;left:90px;top:536px;width:63px;height:19px;overflow:hidden;"><div class="t" style="position:absolute;left:2.3px;top:4.72px;font-size:12.5px;color:#000;transform:scaleX(1.0322);transform-origin:left">2025-08-16</div></div>
<div class="t" style="left:156.00px;top:540.72px;font-size:12.5px;color:#000;font-weight:400;transform:scaleX(1.0578);transform-origin:left">Lina</div>
<div class="t" style="left:220.00px;top:540.72px;font-size:12.5px;color:#000;font-weight:400;transform:scaleX(1.2236);transform-origin:left">Monitor</div>
<div class="t" style="left:-257px;width:600px;text-align:right;top:540.72px;font-size:12.5px;color:#000;font-weight:400;transform:scaleX(1.0069);transform-origin:right">4</div>
<div class="t" style="left:-193px;width:600px;text-align:right;top:540.72px;font-size:12.5px;color:#000;font-weight:400;transform:scaleX(1.0069);transform-origin:right">300</div>
<div class="t" style="left:-129px;width:600px;text-align:right;top:540.72px;font-size:12.5px;color:#000;font-weight:400;transform:scaleX(1.0069);transform-origin:right">1200</div>
<div class="t" style="left:476.00px;top:540.72px;font-size:12.5px;color:#000;font-weight:400;transform:scaleX(1.0697);transform-origin:left">Port Said</div>
<div class="t" style="left:28.00px;top:560.72px;font-size:12.5px;color:#000;font-weight:400;transform:scaleX(0.9895);transform-origin:left">ORD1016</div>
<div style="position:absolute;left:90px;top:556px;width:63px;height:19px;overflow:hidden;"><div class="t" style="position:absolute;left:2.3px;top:4.72px;font-size:12.5px;color:#000;transform:scaleX(1.0322);transform-origin:left">2025-08-17</div></div>
<div class="t" style="left:156.00px;top:560.72px;font-size:12.5px;color:#000;font-weight:400;transform:scaleX(0.9847);transform-origin:left">Sara</div>
<div class="t" style="left:220.00px;top:560.72px;font-size:12.5px;color:#000;font-weight:400;transform:scaleX(1.1194);transform-origin:left">Mouse</div>
<div class="t" style="left:-257px;width:600px;text-align:right;top:560.72px;font-size:12.5px;color:#000;font-weight:400;transform:scaleX(1.0069);transform-origin:right">3</div>
<div class="t" style="left:-193px;width:600px;text-align:right;top:560.72px;font-size:12.5px;color:#000;font-weight:400;transform:scaleX(1.0069);transform-origin:right">150</div>
<div class="t" style="left:-129px;width:600px;text-align:right;top:560.72px;font-size:12.5px;color:#000;font-weight:400;transform:scaleX(1.0069);transform-origin:right">450</div>
<div style="left:537px;top:556px;width:1px;height:19px;background:#fff"></div>
<div class="t" style="left:476.00px;top:560.72px;font-size:12.5px;color:#000;font-weight:400;transform:scaleX(1.1005);transform-origin:left">Alexandria</div>
<div class="t" style="left:28.00px;top:580.72px;font-size:12.5px;color:#000;font-weight:400;transform:scaleX(0.9895);transform-origin:left">ORD1017</div>
<div style="position:absolute;left:90px;top:576px;width:63px;height:19px;overflow:hidden;"><div class="t" style="position:absolute;left:2.3px;top:4.72px;font-size:12.5px;color:#000;transform:scaleX(1.0322);transform-origin:left">2025-08-18</div></div>
<div class="t" style="left:156.00px;top:580.72px;font-size:12.5px;color:#000;font-weight:400;transform:scaleX(1.0791);transform-origin:left">Khaled</div>
<div class="t" style="left:220.00px;top:580.72px;font-size:12.5px;color:#000;font-weight:400;transform:scaleX(1.1194);transform-origin:left">Mouse</div>
<div class="t" style="left:-257px;width:600px;text-align:right;top:580.72px;font-size:12.5px;color:#000;font-weight:400;transform:scaleX(1.0069);transform-origin:right">2</div>
<div class="t" style="left:-193px;width:600px;text-align:right;top:580.72px;font-size:12.5px;color:#000;font-weight:400;transform:scaleX(1.0069);transform-origin:right">200</div>
<div class="t" style="left:-129px;width:600px;text-align:right;top:580.72px;font-size:12.5px;color:#000;font-weight:400;transform:scaleX(1.0069);transform-origin:right">400</div>
<div class="t" style="left:476.00px;top:580.72px;font-size:12.5px;color:#000;font-weight:400;transform:scaleX(1.0697);transform-origin:left">Port Said</div>
<div class="t" style="left:28.00px;top:600.72px;font-size:12.5px;color:#000;font-weight:400;transform:scaleX(0.9895);transform-origin:left">ORD1018</div>
<div style="position:absolute;left:90px;top:596px;width:63px;height:19px;overflow:hidden;"><div class="t" style="position:absolute;left:2.3px;top:4.72px;font-size:12.5px;color:#000;transform:scaleX(1.0322);transform-origin:left">2025-08-19</div></div>
<div class="t" style="left:156.00px;top:600.72px;font-size:12.5px;color:#000;font-weight:400;transform:scaleX(1.1513);transform-origin:left">Mona</div>
<div class="t" style="left:220.00px;top:600.72px;font-size:12.5px;color:#000;font-weight:400;transform:scaleX(1.2236);transform-origin:left">Monitor</div>
<div class="t" style="left:-257px;width:600px;text-align:right;top:600.72px;font-size:12.5px;color:#000;font-weight:400;transform:scaleX(1.0069);transform-origin:right">3</div>
<div class="t" style="left:-193px;width:600px;text-align:right;top:600.72px;font-size:12.5px;color:#000;font-weight:400;transform:scaleX(1.0069);transform-origin:right">100</div>
<div class="t" style="left:-129px;width:600px;text-align:right;top:600.72px;font-size:12.5px;color:#000;font-weight:400;transform:scaleX(1.0069);transform-origin:right">300</div>
<div class="t" style="left:476.00px;top:600.72px;font-size:12.5px;color:#000;font-weight:400;transform:scaleX(1.0713);transform-origin:left">Cairo</div>
<div class="t" style="left:28.00px;top:620.72px;font-size:12.5px;color:#000;font-weight:400;transform:scaleX(0.9895);transform-origin:left">ORD1019</div>
<div style="position:absolute;left:90px;top:616px;width:63px;height:19px;overflow:hidden;"><div class="t" style="position:absolute;left:2.3px;top:4.72px;font-size:12.5px;color:#000;transform:scaleX(1.0322);transform-origin:left">2025-08-20</div></div>
<div class="t" style="left:156.00px;top:620.72px;font-size:12.5px;color:#000;font-weight:400;transform:scaleX(0.9847);transform-origin:left">Sara</div>
<div class="t" style="left:220.00px;top:620.72px;font-size:12.5px;color:#000;font-weight:400;transform:scaleX(1.2236);transform-origin:left">Monitor</div>
<div class="t" style="left:-257px;width:600px;text-align:right;top:620.72px;font-size:12.5px;color:#000;font-weight:400;transform:scaleX(1.0069);transform-origin:right">4</div>
<div class="t" style="left:-193px;width:600px;text-align:right;top:620.72px;font-size:12.5px;color:#000;font-weight:400;transform:scaleX(1.0069);transform-origin:right">150</div>
<div class="t" style="left:-129px;width:600px;text-align:right;top:620.72px;font-size:12.5px;color:#000;font-weight:400;transform:scaleX(1.0069);transform-origin:right">600</div>
<div class="t" style="left:476.00px;top:620.72px;font-size:12.5px;color:#000;font-weight:400;transform:scaleX(1.0713);transform-origin:left">Cairo</div>
<div class="t" style="left:28.00px;top:640.72px;font-size:12.5px;color:#000;font-weight:400;transform:scaleX(0.9895);transform-origin:left">ORD1020</div>
<div style="position:absolute;left:90px;top:636px;width:63px;height:19px;overflow:hidden;"><div class="t" style="position:absolute;left:2.3px;top:4.72px;font-size:12.5px;color:#000;transform:scaleX(1.0322);transform-origin:left">2025-08-21</div></div>
<div class="t" style="left:156.00px;top:640.72px;font-size:12.5px;color:#000;font-weight:400;transform:scaleX(1.0727);transform-origin:left">Fatma</div>
<div class="t" style="left:220.00px;top:640.72px;font-size:12.5px;color:#000;font-weight:400;transform:scaleX(1.1194);transform-origin:left">Mouse</div>
<div class="t" style="left:-257px;width:600px;text-align:right;top:640.72px;font-size:12.5px;color:#000;font-weight:400;transform:scaleX(1.0069);transform-origin:right">2</div>
<div class="t" style="left:-193px;width:600px;text-align:right;top:640.72px;font-size:12.5px;color:#000;font-weight:400;transform:scaleX(1.0069);transform-origin:right">150</div>
<div class="t" style="left:-129px;width:600px;text-align:right;top:640.72px;font-size:12.5px;color:#000;font-weight:400;transform:scaleX(1.0069);transform-origin:right">300</div>
<div style="left:537px;top:636px;width:1px;height:19px;background:#fff"></div>
<div class="t" style="left:476.00px;top:640.72px;font-size:12.5px;color:#000;font-weight:400;transform:scaleX(1.1005);transform-origin:left">Alexandria</div>
<div class="t" style="left:28.00px;top:660.72px;font-size:12.5px;color:#000;font-weight:400;transform:scaleX(0.9895);transform-origin:left">ORD1021</div>
<div style="position:absolute;left:90px;top:656px;width:63px;height:19px;overflow:hidden;"><div class="t" style="position:absolute;left:2.3px;top:4.72px;font-size:12.5px;color:#000;transform:scaleX(1.0322);transform-origin:left">2025-08-22</div></div>
<div class="t" style="left:156.00px;top:660.72px;font-size:12.5px;color:#000;font-weight:400;transform:scaleX(1.0578);transform-origin:left">Lina</div>
<div class="t" style="left:220.00px;top:660.72px;font-size:12.5px;color:#000;font-weight:400;transform:scaleX(1.2236);transform-origin:left">Monitor</div>
<div class="t" style="left:-257px;width:600px;text-align:right;top:660.72px;font-size:12.5px;color:#000;font-weight:400;transform:scaleX(1.0069);transform-origin:right">2</div>
<div class="t" style="left:-193px;width:600px;text-align:right;top:660.72px;font-size:12.5px;color:#000;font-weight:400;transform:scaleX(1.0069);transform-origin:right">50</div>
<div class="t" style="left:-129px;width:600px;text-align:right;top:660.72px;font-size:12.5px;color:#000;font-weight:400;transform:scaleX(1.0069);transform-origin:right">100</div>
<div class="t" style="left:476.00px;top:660.72px;font-size:12.5px;color:#000;font-weight:400;transform:scaleX(1.0713);transform-origin:left">Cairo</div>
<svg style="position:absolute;left:12px;top:64px;" width="31" height="32" viewBox="0 0 31 32"><rect x="1.2" y="4" width="23.6" height="24.7" rx="1.5" fill="#dadada"/><rect x="5.4" y="3" width="15.3" height="6.2" fill="#f1f1f1"/><path d="M6.2 4.2H10V1.6Q10 1.2 10.5 1.2H15.3Q15.8 1.2 15.8 1.6V4.2H19.9V7.8H6.2Z" fill="#b4b4b4"/><rect x="11.8" y="2.8" width="2.2" height="1.8" fill="#f1f1f1"/><path d="M15.6 12.5H23.4L28.4 17.4V30.3H15.6Z" fill="#f7f7f7" stroke="#ababab" stroke-width="1.3"/><path d="M23.4 12.5V17.4H28.4" fill="none" stroke="#ababab" stroke-width="1.1"/></svg>
<div class="t" style="left:11.50px;top:99.80px;font-size:11.7px;color:#a8a8a8;font-weight:400;;transform:scaleX(0.9192);transform-origin:left">Paste</div>
<svg style="position:absolute;left:21.5px;top:120px;" width="5" height="4" viewBox="0 0 5 4"><path d="M0 0.2h5l-2.5 3.3z" fill="#b4b4b4"/></svg>
<svg style="position:absolute;left:49px;top:62px;" width="16" height="17" viewBox="0 0 16 17"><path d="M3.5 1.2L10.5 11.5M12.5 1.2L5.5 11.5" stroke="#666" stroke-width="1.7"/><circle cx="3.8" cy="13.3" r="2.7" fill="none" stroke="#2f75b5" stroke-width="1.1"/><circle cx="12.2" cy="13.3" r="2.7" fill="none" stroke="#2f75b5" stroke-width="1.1"/></svg>
<div class="t" style="left:68.40px;top:66.10px;font-size:11.7px;color:#444444;font-weight:400;;transform:scaleX(1.0217);transform-origin:left">Cut</div>
<svg style="position:absolute;left:48px;top:86px;" width="17" height="16" viewBox="0 0 17 16"><path d="M7 11.7H1.5V1.5H7.5L9 3" fill="#fff" stroke="#666" stroke-width="1.1"/><path d="M3 4.5H5M3 6.4H6M3 8.4H6" stroke="#2f75b5" stroke-width="1.1"/><path d="M7.5 4.7H12.8L15.9 7.8V14.8H7.5Z" fill="#fff" stroke="#666" stroke-width="1.1"/><path d="M12.8 4.7V7.8H15.9" fill="none" stroke="#666" stroke-width="1"/><path d="M9.3 7.5H10.8M9.3 9.4H14M9.3 11.5H14" stroke="#2f75b5" stroke-width="1.1"/></svg>
<div class="t" style="left:68.40px;top:88.70px;font-size:11.7px;color:#444444;font-weight:400;;transform:scaleX(1.0107);transform-origin:left">Copy</div>
<svg style="position:absolute;left:105.5px;top:94.5px;" width="5" height="4" viewBox="0 0 5 4"><path d="M0 0.2h5l-2.5 3.3z" fill="#6a6a6a"/></svg>
<svg style="position:absolute;left:48px;top:109px;" width="17" height="16" viewBox="0 0 17 16"><path d="M11 5.5L15.5 1" stroke="#6a6a6a" stroke-width="3.2" stroke-linecap="round"/><path d="M6.5 4.5L12.5 10.5L9.5 13.5L3.5 7.5z" fill="#707070"/><path d="M3.5 7.5L9.5 13.5L7 15.8L0.8 14.8L0.2 9z" fill="#f7b860"/><path d="M1.5 10.5l4.5 4.5M3 9l4.5 4.5M1 13l2.5 2.5" stroke="#fde3b8" stroke-width=".9"/></svg>
<div class="t" style="left:68.40px;top:111.70px;font-size:11.7px;color:#444444;font-weight:400;;transform:scaleX(1.0029);transform-origin:left">Format Painter</div>
<div style="left:162px;top:68px;width:111px;height:23px;background:#fff;border:1px solid #c6c6c6;box-sizing:border-box"></div>
<div style="left:272px;top:68px;width:44px;height:23px;background:#fff;border:1px solid #c6c6c6;box-sizing:border-box"></div>
<div class="t" style="left:165.50px;top:74.10px;font-size:11.7px;color:#262626;font-weight:400;;transform:scaleX(1.0043);transform-origin:left">Calibri</div>
<div class="t" style="left:276.50px;top:74.10px;font-size:11.7px;color:#262626;font-weight:400;;transform:scaleX(0.8811);transform-origin:left">11</div>
<svg style="position:absolute;left:262.5px;top:78px;" width="6" height="4" viewBox="0 0 6 4"><path d="M0 0.2h6l-3.0 3.3z" fill="#6a6a6a"/></svg>
<svg style="position:absolute;left:305.5px;top:78px;" width="6" height="4" viewBox="0 0 6 4"><path d="M0 0.2h6l-3.0 3.3z" fill="#6a6a6a"/></svg>
<div class="t" style="left:322.50px;top:73.23px;font-size:14.5px;color:#555;font-weight:400;">A</div>
<svg style="position:absolute;left:331px;top:71px;" width="7" height="4" viewBox="0 0 7 4"><path d="M0 3.5L3 0.3L6 3.5z" fill="#2f75b5"/></svg>
<div class="t" style="left:345.00px;top:75.77px;font-size:11.5px;color:#555;font-weight:400;">A</div>
<svg style="position:absolute;left:353px;top:72px;" width="7" height="4" viewBox="0 0 7 4"><path d="M0 0.3H6L3 3.5z" fill="#2f75b5"/></svg>
<div class="t" style="left:168.50px;top:103.30px;font-size:13px;color:#444;font-weight:700;">B</div>
<svg style="position:absolute;left:189px;top:104px;" width="11" height="11" viewBox="0 0 11 11"><path d="M3.8 0.9H9.4M1.4 9.9H7M6.9 0.9L3.9 9.9" stroke="#444" stroke-width="1.4" fill="none"/></svg>
<div class="t" style="left:211.00px;top:103.30px;font-size:13px;color:#444;font-weight:700;">U</div>
<div style="left:211px;top:115px;width:10px;height:1.3px;background:#444"></div>
<svg style="position:absolute;left:230.5px;top:109px;" width="6" height="4" viewBox="0 0 6 4"><path d="M0 0.2h6l-3.0 3.3z" fill="#6a6a6a"/></svg>
<div style="left:244px;top:99px;width:1px;height:22px;background:#d9d9d9"></div>
<svg style="position:absolute;left:252px;top:103px;" width="14" height="14" viewBox="0 0 14 14"><path d="M0.5 0.5h13M0.5 0.5v12M13.5 0.5v12M7 0.5v12M0.5 6.5h13" stroke="#8a8a8a" stroke-dasharray="1 1" fill="none"/><path d="M0 13.5h14" stroke="#666"/></svg>
<svg style="position:absolute;left:273.5px;top:109px;" width="6" height="4" viewBox="0 0 6 4"><path d="M0 0.2h6l-3.0 3.3z" fill="#6a6a6a"/></svg>
<div style="left:287px;top:99px;width:1px;height:22px;background:#d9d9d9"></div>
<svg style="position:absolute;left:294px;top:99px;" width="20" height="15" viewBox="0 0 20 15"><path d="M8 2L14 8L9 13L3 7z" fill="#fff" stroke="#555"/><path d="M7.5 2V7" stroke="#555"/><path d="M14.5 7.5c1.5 1.5 2 3.2 1 4.5c-1-.8-1.2-2.5-1-4.5z" fill="#2f75b5"/></svg>
<div style="left:295px;top:114px;width:16px;height:4px;background:#ffff00"></div>
<svg style="position:absolute;left:317px;top:109px;" width="6" height="4" viewBox="0 0 6 4"><path d="M0 0.2h6l-3.0 3.3z" fill="#6a6a6a"/></svg>
<div class="t" style="left:330.50px;top:100.38px;font-size:15.5px;color:#555;font-weight:400;-webkit-text-stroke:0.4px #555">A</div>
<div style="left:329px;top:114px;width:16px;height:4px;background:#ff0000"></div>
<svg style="position:absolute;left:350.5px;top:109px;" width="6" height="4" viewBox="0 0 6 4"><path d="M0 0.2h6l-3.0 3.3z" fill="#6a6a6a"/></svg>
<div style="left:373px;top:71px;width:14px;height:1px;background:#6a6a6a"></div>
<div style="left:374px;top:74px;width:12px;height:1px;background:#6a6a6a"></div>
<div style="left:373px;top:77px;width:14px;height:1px;background:#6a6a6a"></div>
<div style="left:395px;top:75px;width:14px;height:1px;background:#6a6a6a"></div>
<div style="left:396px;top:78px;width:12px;height:1px;background:#6a6a6a"></div>
<div style="left:395px;top:81px;width:14px;height:1px;background:#6a6a6a"></div>
<div style="left:413px;top:68px;width:22px;height:23px;background:#c8c8c8"></div>
<div style="left:417px;top:80px;width:14px;height:1px;background:#6a6a6a"></div>
<div style="left:418px;top:83px;width:12px;height:1px;background:#6a6a6a"></div>
<div style="left:417px;top:86px;width:14px;height:1px;background:#6a6a6a"></div>
<div style="left:439px;top:68px;width:1px;height:22px;background:#d9d9d9"></div>
<svg style="position:absolute;left:444px;top:68px;" width="22" height="20" viewBox="0 0 22 20"><text x="8" y="8.6" font-family="Liberation Sans" font-size="11.5" fill="#4a4a4a" text-anchor="middle" dominant-baseline="central" transform="rotate(-45 7.6 8.2)">ab</text><path d="M9.5 17.5L18.5 8.5" stroke="#555" stroke-width="1.2"/><path d="M19.5 7.5L14.8 8.6L18.4 12.2z" fill="#555"/></svg>
<svg style="position:absolute;left:466.5px;top:77.5px;" width="6" height="4" viewBox="0 0 6 4"><path d="M0 0.2h6l-3.0 3.3z" fill="#6a6a6a"/></svg>
<div style="left:481px;top:68px;width:1px;height:22px;background:#d9d9d9"></div>
<svg style="position:absolute;left:490px;top:74px;" width="14" height="10" viewBox="0 0 14 10"><path d="M0.5 0.5L5 4.5L0.5 8.5z" fill="#2f75b5"/><path d="M9 9V1M12 9V1M12 1H8.5a2.6 2.6 0 0 0 0 5.2H9" stroke="#555" stroke-width="1.5" fill="none"/></svg>
<svg style="position:absolute;left:510.5px;top:77.5px;" width="6" height="4" viewBox="0 0 6 4"><path d="M0 0.2h6l-3.0 3.3z" fill="#6a6a6a"/></svg>
<div style="left:524px;top:67px;width:1px;height:55px;background:#d9d9d9"></div>
<div style="left:373px;top:105px;width:14px;height:1px;background:#6a6a6a"></div>
<div style="left:373px;top:108px;width:9px;height:1px;background:#6a6a6a"></div>
<div style="left:373px;top:111px;width:14px;height:1px;background:#6a6a6a"></div>
<div style="left:373px;top:114px;width:9px;height:1px;background:#6a6a6a"></div>
<div style="left:395px;top:105px;width:14px;height:1px;background:#6a6a6a"></div>
<div style="left:397.5px;top:108px;width:9px;height:1px;background:#6a6a6a"></div>
<div style="left:395px;top:111px;width:14px;height:1px;background:#6a6a6a"></div>
<div style="left:397.5px;top:114px;width:9px;height:1px;background:#6a6a6a"></div>
<div style="left:417px;top:105px;width:14px;height:1px;background:#6a6a6a"></div>
<div style="left:422px;top:108px;width:9px;height:1px;background:#6a6a6a"></div>
<div style="left:417px;top:111px;width:14px;height:1px;background:#6a6a6a"></div>
<div style="left:422px;top:114px;width:9px;height:1px;background:#6a6a6a"></div>
<div style="left:439px;top:99px;width:1px;height:22px;background:#d9d9d9"></div>
<svg style="position:absolute;left:446px;top:102px;" width="18" height="15" viewBox="0 0 18 15"><path d="M1 1.5h16M1 13.5h16M9 4.5h8M9 7.5h8M9 10.5h8" stroke="#6a6a6a" stroke-width="1"/><path d="M1.5 7.5h6" stroke="#2f75b5" stroke-width="1.8"/><path d="M4.3 4.5L1.3 7.5L4.3 10.5" stroke="#2f75b5" stroke-width="1.8" fill="none"/></svg>
<svg style="position:absolute;left:468px;top:102px;" width="18" height="15" viewBox="0 0 18 15"><path d="M1 1.5h16M1 13.5h16M9 4.5h8M9 7.5h8M9 10.5h8" stroke="#6a6a6a" stroke-width="1"/><path d="M1 7.5h6" stroke="#2f75b5" stroke-width="1.8"/><path d="M4.2 4.5L7.2 7.5L4.2 10.5" stroke="#2f75b5" stroke-width="1.8" fill="none"/></svg>
<svg style="position:absolute;left:531px;top:70px;" width="18" height="17" viewBox="0 0 18 17"><rect x="1.6" y="1.4" width="9.3" height="4.3" fill="#fff" stroke="#666" stroke-width="1.1"/><rect x="1.6" y="8.7" width="9.3" height="7.1" fill="#fff" stroke="#666" stroke-width="1.1"/><path d="M3 3.4H15M3 10.4H9M3 12.5H9" stroke="#2f75b5" stroke-width="1.1"/><path d="M16.6 6V8.4Q16.6 9.4 15.6 9.4H11.2M13.4 7.2L11.2 9.4L13.4 11.6" stroke="#2f75b5" fill="none" stroke-width="1.3"/></svg>
<div class="t" style="left:551.20px;top:73.70px;font-size:11.7px;color:#444444;font-weight:400;;transform:scaleX(0.9820);transform-origin:left">Wrap Text</div>
<svg style="position:absolute;left:531px;top:101px;" width="17" height="17" viewBox="0 0 17 17"><rect x="1.5" y="1.5" width="14" height="14" fill="#fff" stroke="#666"/><path d="M1.5 4.5h14M1.5 12.5h14M8.5 1.5V4.5M8.5 12.5v3" stroke="#666"/><path d="M4 8.5h9M5.8 6.5L4 8.5L5.8 10.5M11.2 6.5L13 8.5L11.2 10.5" stroke="#2f75b5" fill="none" stroke-width="1.1"/></svg>
<div class="t" style="left:551.00px;top:105.10px;font-size:11.7px;color:#444444;font-weight:400;;transform:scaleX(1.0255);transform-origin:left">Merge &amp; Center</div>
<svg style="position:absolute;left:645px;top:109px;" width="6" height="4" viewBox="0 0 6 4"><path d="M0 0.2h6l-3.0 3.3z" fill="#6a6a6a"/></svg>
<div style="left:665px;top:68px;width:131px;height:23px;background:#fff;border:1px solid #c6c6c6;box-sizing:border-box"></div>
<div class="t" style="left:668.40px;top:74.10px;font-size:11.7px;color:#262626;font-weight:400;;transform:scaleX(0.9369);transform-origin:left">General</div>
<svg style="position:absolute;left:784px;top:78px;" width="6" height="4" viewBox="0 0 6 4"><path d="M0 0.2h6l-3.0 3.3z" fill="#6a6a6a"/></svg>
<svg style="position:absolute;left:672px;top:103px;" width="9" height="15" viewBox="0 0 9 15"><path d="M7.3 3.2C6.6 2.3 5.6 1.9 4.4 1.9C2.8 1.9 1.6 2.8 1.6 4.2C1.6 7.2 7.6 6.2 7.6 9.8C7.6 11.3 6.3 12.3 4.5 12.3C3.2 12.3 2 11.8 1.2 10.8M4.5 0V14" stroke="#555" stroke-width="1.2" fill="none"/></svg>
<svg style="position:absolute;left:689px;top:109px;" width="6" height="4" viewBox="0 0 6 4"><path d="M0 0.2h6l-3.0 3.3z" fill="#6a6a6a"/></svg>
<svg style="position:absolute;left:704px;top:104px;" width="13" height="12" viewBox="0 0 13 12"><circle cx="3" cy="3" r="2.2" fill="none" stroke="#555" stroke-width="1.3"/><circle cx="10" cy="9" r="2.2" fill="none" stroke="#555" stroke-width="1.3"/><path d="M10.5 0.8L2.5 11.2" stroke="#555" stroke-width="1.3"/></svg>
<svg style="position:absolute;left:728px;top:106px;" width="7" height="8" viewBox="0 0 7 8"><circle cx="3.6" cy="2.6" r="2.4" fill="#555"/><path d="M5.8 2.8C5.8 5.2 4.3 6.8 1.8 7.4" stroke="#555" stroke-width="1.6" fill="none"/></svg>
<div style="left:747px;top:99px;width:1px;height:22px;background:#d9d9d9"></div>
<div class="t" style="left:761.5px;top:101.5px;font-size:7.5px;color:#444;line-height:7.6px">.0</div>
<div class="t" style="left:757.3px;top:109px;font-size:7.5px;color:#444;line-height:7.6px">.00</div>
<svg style="position:absolute;left:754px;top:104px;" width="9" height="6" viewBox="0 0 9 6"><path d="M8 3H1.2M3.4 0.8L1.2 3L3.4 5.2" stroke="#2f75b5" fill="none" stroke-width="1.3"/></svg>
<div class="t" style="left:779.3px;top:101.5px;font-size:7.5px;color:#444;line-height:7.6px">.00</div>
<div class="t" style="left:784px;top:109px;font-size:7.5px;color:#444;line-height:7.6px">.0</div>
<svg style="position:absolute;left:776.5px;top:110.5px;" width="9" height="6" viewBox="0 0 9 6"><path d="M0.5 3H7.3M5.1 0.8L7.3 3L5.1 5.2" stroke="#2f75b5" fill="none" stroke-width="1.3"/></svg>
<svg style="position:absolute;left:826px;top:64px;" width="32" height="32" viewBox="0 0 32 32"><rect x="1.5" y="1.5" width="27" height="23" fill="#fff" stroke="#777"/><path d="M1.5 7.5h27M1.5 13.5h27M1.5 19.5h27M8.5 1.5v23M20.5 1.5v23" stroke="#999" fill="none"/><rect x="9" y="2" width="6" height="5" fill="#e58a2c"/><rect x="9" y="8" width="11" height="5" fill="#2f75b5"/><rect x="9" y="14" width="8" height="5" fill="#e58a2c"/><rect x="9" y="20" width="4" height="4.5" fill="#2f75b5"/><rect x="15.3" y="18.2" width="15" height="12.3" fill="#fff" stroke="#666"/><path d="M18.8 22.3h8M18.8 25.6h8M25.3 19.8L20.6 28.6" stroke="#333" stroke-width="1.2"/></svg>
<div class="t" style="left:810.30px;top:99.90px;font-size:11.7px;color:#444444;font-weight:400;;transform:scaleX(1.0455);transform-origin:left">Conditional</div>
<div class="t" style="left:807.50px;top:115.90px;font-size:11.7px;color:#444444;font-weight:400;;transform:scaleX(1.0319);transform-origin:left">Formatting</div>
<svg style="position:absolute;left:868.7px;top:121px;" width="5" height="4" viewBox="0 0 5 4"><path d="M0 0.2h5l-2.5 3.3z" fill="#6a6a6a"/></svg>
<svg style="position:absolute;left:891px;top:66px;" width="32" height="30" viewBox="0 0 32 30"><rect x="1.5" y="1.5" width="24" height="20" fill="#fff" stroke="#777"/><path d="M1.5 6.5h24M1.5 11.5h24M1.5 16.5h24M7.5 1.5v20M13.5 1.5v20M19.5 1.5v20" stroke="#aaa" fill="none"/><rect x="8" y="7" width="17" height="14" fill="#bcd9ea"/><path d="M8 11.5h17M8 16.5h17M13.5 7v14M19.5 7v14" stroke="#9ec4dc"/><path d="M30 6L22 17" stroke="#666" stroke-width="3.5"/><path d="M21 16c-3 1-4 4-4 4s-2 4-5 7c4 0 8-2 10-5c1-2 1-4-1-6z" fill="#2f75b5"/><circle cx="20" cy="20.5" r="1.6" fill="#fff"/></svg>
<div class="t" style="left:879.60px;top:99.90px;font-size:11.7px;color:#444444;font-weight:400;;transform:scaleX(0.9684);transform-origin:left">Format as</div>
<div class="t" style="left:889.60px;top:115.90px;font-size:11.7px;color:#444444;font-weight:400;;transform:scaleX(0.8937);transform-origin:left">Table</div>
<svg style="position:absolute;left:917.7px;top:121px;" width="5" height="4" viewBox="0 0 5 4"><path d="M0 0.2h5l-2.5 3.3z" fill="#6a6a6a"/></svg>
<svg style="position:absolute;left:941px;top:64px;" width="32" height="30" viewBox="0 0 32 30"><rect x="1.5" y="1.5" width="24" height="20" fill="#fff" stroke="#777"/><path d="M1.5 6.5h24M1.5 16.5h24M7.5 1.5v20M19.5 1.5v20" stroke="#999" fill="none"/><rect x="8" y="7" width="11" height="9" fill="#bcd9ea"/><path d="M30 6L22 17" stroke="#666" stroke-width="3.5"/><path d="M21 16c-3 1-4 4-4 4s-2 4-5 7c4 0 8-2 10-5c1-2 1-4-1-6z" fill="#2f75b5"/><circle cx="20" cy="20.5" r="1.6" fill="#fff"/></svg>
<div class="t" style="left:945.50px;top:99.90px;font-size:11.7px;color:#444444;font-weight:400;;transform:scaleX(0.9524);transform-origin:left">Cell</div>
<div class="t" style="left:936.20px;top:115.90px;font-size:11.7px;color:#444444;font-weight:400;;transform:scaleX(0.9291);transform-origin:left">Styles</div>
<svg style="position:absolute;left:969.1px;top:121px;" width="5" height="4" viewBox="0 0 5 4"><path d="M0 0.2h5l-2.5 3.3z" fill="#6a6a6a"/></svg>
<svg style="position:absolute;left:993px;top:64px;" width="28" height="29" viewBox="0 0 28 29"><rect x="1.5" y="1.5" width="14" height="5" fill="#fff" stroke="#777"/><path d="M8.5 1.5v5" stroke="#777"/><rect x="12.5" y="8.5" width="14" height="5" fill="#bcd9ea" stroke="#777"/><path d="M19.5 8.5v5" stroke="#777"/><path d="M2 11h7M5 8L2 11L5 14" stroke="#2f75b5" stroke-width="1.6" fill="none"/><rect x="1.5" y="15.5" width="14" height="12" fill="#fff" stroke="#777"/><path d="M1.5 21.5h14M8.5 15.5v12" stroke="#777"/></svg>
<div class="t" style="left:992.20px;top:99.70px;font-size:11.7px;color:#444444;font-weight:400;;transform:scaleX(0.9740);transform-origin:left">Insert</div>
<svg style="position:absolute;left:1004px;top:120px;" width="5" height="4" viewBox="0 0 5 4"><path d="M0 0.2h5l-2.5 3.3z" fill="#6a6a6a"/></svg>
<svg style="position:absolute;left:1034px;top:64px;" width="31" height="29" viewBox="0 0 31 29"><rect x="1.5" y="1.5" width="14" height="5" fill="#fff" stroke="#777"/><path d="M8.5 1.5v5" stroke="#777"/><rect x="6.5" y="8.5" width="12" height="5" fill="#bcd9ea" stroke="#777"/><path d="M12.5 8.5v5" stroke="#777"/><rect x="1.5" y="15.5" width="14" height="12" fill="#fff" stroke="#777"/><path d="M1.5 21.5h14M8.5 15.5v12" stroke="#777"/><path d="M15 6L28 14M27.5 4.5L15.5 15" stroke="#e58a2c" stroke-width="2.2"/></svg>
<div class="t" style="left:1032.50px;top:99.70px;font-size:11.7px;color:#444444;font-weight:400;;transform:scaleX(0.9608);transform-origin:left">Delete</div>
<svg style="position:absolute;left:1046px;top:120px;" width="5" height="4" viewBox="0 0 5 4"><path d="M0 0.2h5l-2.5 3.3z" fill="#6a6a6a"/></svg>
<svg style="position:absolute;left:1076px;top:63px;" width="31" height="33" viewBox="0 0 31 33"><path d="M1.5 1v5M28.5 1v5M2 3.5h26M5 1.5L2 3.5L5 5.5M25 1.5L28 3.5L25 5.5" stroke="#2f75b5" fill="none"/><rect x="1.5" y="8.5" width="27" height="20" fill="#fff" stroke="#777"/><path d="M1.5 13.5h27M1.5 23.5h27M8.5 8.5v20M15.5 8.5v20M22.5 8.5v20" stroke="#999"/><rect x="9" y="13" width="7" height="10.5" fill="#2f75b5"/><path d="M1.5 28.5v3h7l3-3M10 31.5h7l3-3" stroke="#777" fill="#fff"/></svg>
<div class="t" style="left:1072.70px;top:99.70px;font-size:11.7px;color:#444444;font-weight:400;;transform:scaleX(0.9985);transform-origin:left">Format</div>
<svg style="position:absolute;left:1088.5px;top:120px;" width="5" height="4" viewBox="0 0 5 4"><path d="M0 0.2h5l-2.5 3.3z" fill="#6a6a6a"/></svg>
<svg style="position:absolute;left:1124px;top:62px;" width="17" height="17" viewBox="0 0 17 17"><path d="M1.5 1.8H15.5M2.2 1.8L8.8 8.3L2.2 14.8M1.5 14.8H15.5" stroke="#444" stroke-width="2.1" fill="none"/></svg>
<div class="t" style="left:1144.30px;top:65.80px;font-size:11.7px;color:#444444;font-weight:400;;transform:scaleX(1.0203);transform-origin:left">AutoSum</div>
<svg style="position:absolute;left:1203px;top:70px;" width="5" height="4" viewBox="0 0 5 4"><path d="M0 0.2h5l-2.5 3.3z" fill="#6a6a6a"/></svg>
<svg style="position:absolute;left:1125px;top:85px;" width="16" height="17" viewBox="0 0 16 17"><rect x="0.5" y="0.5" width="14" height="15" fill="#fff" stroke="#666"/><rect x="0.5" y="0.5" width="14" height="3" fill="#666"/><path d="M7.5 5v7.5M4.5 9.5l3 3l3-3" stroke="#2f75b5" stroke-width="1.8" fill="none"/></svg>
<div class="t" style="left:1144.30px;top:88.70px;font-size:11.7px;color:#444444;font-weight:400;;transform:scaleX(0.9437);transform-origin:left">Fill</div>
<svg style="position:absolute;left:1162px;top:93px;" width="5" height="4" viewBox="0 0 5 4"><path d="M0 0.2h5l-2.5 3.3z" fill="#6a6a6a"/></svg>
<svg style="position:absolute;left:1125px;top:109px;" width="16" height="15" viewBox="0 0 16 15"><path d="M9 1L14 6L7 13H3L1 11z" fill="#f3b877"/><path d="M3 8L7 12M5 6l4 4M7 4l4 4" stroke="#fbdcb8" stroke-width=".8"/><path d="M4 14h11" stroke="#666"/></svg>
<div class="t" style="left:1144.30px;top:111.80px;font-size:11.7px;color:#444444;font-weight:400;;transform:scaleX(0.9513);transform-origin:left">Clear</div>
<svg style="position:absolute;left:1175px;top:116px;" width="5" height="4" viewBox="0 0 5 4"><path d="M0 0.2h5l-2.5 3.3z" fill="#6a6a6a"/></svg>
<svg style="position:absolute;left:1219px;top:65px;" width="31" height="28" viewBox="0 0 31 28"><path d="M9 13L5 2L1 13M2.3 9.5h5.4" stroke="#2f75b5" stroke-width="1.9" fill="none"/><path d="M1.5 16h7.5L1.5 26h8" stroke="#999" stroke-width="1.9" fill="none"/><path d="M12 7.5h18l-7 7.5v9l-4-3v-6z" fill="#777"/></svg>
<div class="t" style="left:1218.30px;top:99.90px;font-size:11.7px;color:#444444;font-weight:400;;transform:scaleX(1.0211);transform-origin:left">Sort &amp;</div>
<div class="t" style="left:1218.30px;top:115.90px;font-size:11.7px;color:#444444;font-weight:400;;transform:scaleX(0.9886);transform-origin:left">Filter</div>
<svg style="position:absolute;left:1247.1px;top:121px;" width="5" height="4" viewBox="0 0 5 4"><path d="M0 0.2h5l-2.5 3.3z" fill="#6a6a6a"/></svg>
<svg style="position:absolute;left:1262px;top:64px;" width="31" height="29" viewBox="0 0 31 29"><circle cx="19" cy="10.5" r="8" fill="#fff" stroke="#2f75b5" stroke-width="2.2"/><path d="M13 16.5L3 26.5" stroke="#2f75b5" stroke-width="3.2" stroke-linecap="round"/></svg>
<div class="t" style="left:1260.50px;top:99.90px;font-size:11.7px;color:#444444;font-weight:400;;transform:scaleX(1.0351);transform-origin:left">Find &amp;</div>
<div class="t" style="left:1258.00px;top:115.90px;font-size:11.7px;color:#444444;font-weight:400;;transform:scaleX(0.9534);transform-origin:left">Select</div>
<svg style="position:absolute;left:1292.1px;top:121px;" width="5" height="4" viewBox="0 0 5 4"><path d="M0 0.2h5l-2.5 3.3z" fill="#6a6a6a"/></svg>
<svg style="position:absolute;left:1346px;top:137px;" width="11" height="7" viewBox="0 0 11 7"><path d="M1.5 5.8L5.5 1.8L9.5 5.8" stroke="#666" stroke-width="2" fill="none"/></svg>
<div style="left:536px;top:214px;width:67px;height:23px;border:2px solid #217346;box-sizing:border-box"></div>
<div style="left:24px;top:216px;width:2px;height:20px;background:#217346"></div>
<div style="left:598px;top:232px;width:7px;height:7px;background:#fff"></div>
<div style="left:599px;top:233px;width:5px;height:5px;background:#217346"></div>
<svg style="position:absolute;left:573px;top:222px;" width="18" height="18" viewBox="0 0 18 18"><g fill="#000" opacity=".85"><rect x="6" y="2" width="6" height="14"/><rect x="2" y="6" width="14" height="6.5"/></g><g fill="#000"><rect x="5" y="1" width="6" height="14"/><rect x="1" y="5" width="14" height="6.5"/></g><g fill="#fff"><rect x="6" y="2" width="4" height="12"/><rect x="2" y="6" width="12" height="4.5"/></g></svg>
<div style="left:1344px;top:215px;width:1px;height:464px;background:#ababab"></div>
<div style="left:1345px;top:196px;width:21px;height:482px;background:#e6e6e6"></div>
<div style="left:1348px;top:213px;width:15px;height:452px;background:#d9d9d9;background-image:radial-gradient(#cdcdcd 0.6px, transparent 0.7px);background-size:2px 2px"></div>
<div style="left:1348px;top:198px;width:15px;height:15px;background:#fff;border:1px solid #ababab;box-sizing:border-box"></div>
<svg style="position:absolute;left:1351px;top:203px;" width="9" height="5" viewBox="0 0 9 5"><path d="M0 4.5L4.5 0L9 4.5z" fill="#666"/></svg>
<div style="left:1348px;top:213px;width:15px;height:202px;background:#fff;border:1px solid #ababab;box-sizing:border-box"></div>
<div style="left:1348px;top:664px;width:15px;height:15px;background:#fff;border:1px solid #c6c6c6;box-sizing:border-box"></div>
<svg style="position:absolute;left:1351px;top:669px;" width="9" height="5" viewBox="0 0 9 5"><path d="M0 0H9L4.5 4.5z" fill="#666"/></svg>
<div style="left:0px;top:678px;width:1366px;height:28px;background:#e6e6e6"></div>
<div style="left:0px;top:678px;width:1345px;height:1px;background:#ababab"></div>
<svg style="position:absolute;left:27px;top:687px;" width="5" height="9" viewBox="0 0 5 9"><path d="M4.5 0V9L0 4.5z" fill="#c1c1c1"/></svg>
<svg style="position:absolute;left:56px;top:687px;" width="5" height="9" viewBox="0 0 5 9"><path d="M0 0V9L4.5 4.5z" fill="#c1c1c1"/></svg>
<div style="left:100px;top:678px;width:65px;height:24px;background:#fff;border-left:1px solid #ababab;border-right:1px solid #ababab;box-sizing:border-box"></div>
<div style="left:100px;top:701px;width:65px;height:2px;background:#217346"></div>
<div class="t" style="left:112.50px;top:686.16px;font-size:12.8px;color:#217346;font-weight:700;;transform:scaleX(0.9411);transform-origin:left">Sheet1</div>
<svg style="position:absolute;left:197px;top:683px;" width="17" height="17" viewBox="0 0 17 17"><circle cx="8.5" cy="8.5" r="7.5" fill="none" stroke="#777" stroke-width="1.1"/><path d="M8.5 4.2v8.6M4.2 8.5h8.6" stroke="#666" stroke-width="2"/></svg>
<div style="left:819px;top:687px;width:2px;height:2px;background:#a6a6a6"></div>
<div style="left:819px;top:691px;width:2px;height:2px;background:#a6a6a6"></div>
<div style="left:819px;top:695px;width:2px;height:2px;background:#a6a6a6"></div>
<div style="left:850px;top:686px;width:481px;height:13px;background:#d9d9d9;background-image:radial-gradient(#cdcdcd 0.6px, transparent 0.7px);background-size:2px 2px"></div>
<div style="left:836px;top:685px;width:15px;height:15px;background:#fff;border:1px solid #ababab;box-sizing:border-box"></div>
<svg style="position:absolute;left:840px;top:688px;" width="5" height="9" viewBox="0 0 5 9"><path d="M4.5 0V9L0 4.5z" fill="#555"/></svg>
<div style="left:850px;top:685px;width:456px;height:15px;background:#fff;border:1px solid #ababab;box-sizing:border-box"></div>
<div style="left:1330px;top:685px;width:15px;height:15px;background:#fff;border:1px solid #ababab;box-sizing:border-box"></div>
<svg style="position:absolute;left:1335px;top:688px;" width="5" height="9" viewBox="0 0 5 9"><path d="M0 0V9L4.5 4.5z" fill="#555"/></svg>
<div style="left:0px;top:706px;width:1366px;height:1px;background:#c6c6c6"></div>
<div style="left:0px;top:707px;width:1366px;height:21px;background:#f1f1f1"></div>
<div class="t" style="left:7.40px;top:711.10px;font-size:11.7px;color:#444;font-weight:400;;transform:scaleX(0.8988);transform-origin:left">Ready</div>
<div style="left:1074px;top:707px;width:38px;height:21px;background:#c8c8c8"></div>
<svg style="position:absolute;left:1085px;top:710px;" width="15" height="14" viewBox="0 0 15 14"><rect x="0.5" y="0.5" width="13" height="12" fill="none" stroke="#555"/><path d="M0.5 4.5h13M0.5 8.5h13M4.5 0.5v12M9.5 0.5v12" stroke="#555"/></svg>
<svg style="position:absolute;left:1123px;top:710px;" width="15" height="14" viewBox="0 0 15 14"><rect x="0.5" y="0.5" width="13" height="12" fill="none" stroke="#555"/><rect x="3" y="3" width="8" height="7" fill="none" stroke="#555"/><path d="M4.5 5h5M4.5 7.5h5" stroke="#555"/></svg>
<svg style="position:absolute;left:1161px;top:710px;" width="15" height="14" viewBox="0 0 15 14"><rect x="0.5" y="0.5" width="13" height="12" fill="none" stroke="#555"/><path d="M5.5 0.5v6h3v-6" fill="none" stroke="#555"/></svg>
<div style="left:1193px;top:716px;width:7px;height:2px;background:#555"></div>
<div style="left:1203px;top:716px;width:100px;height:1px;background:#9a9a9a"></div>
<div style="left:1251px;top:711px;width:4px;height:11px;background:#555"></div>
<div style="left:1307px;top:716px;width:9px;height:2px;background:#555"></div>
<div style="left:1310.5px;top:712.5px;width:2px;height:9px;background:#555"></div>
<div class="t" style="left:1330.70px;top:711.10px;font-size:11.7px;color:#444;font-weight:400;;transform:scaleX(0.8788);transform-origin:left">100%</div>
<div class="t" style="left:1073.40px;top:651.84px;font-size:19.8px;color:rgba(110,110,110,.4);font-weight:400;;transform:scaleX(1.0002);transform-origin:left">Activate Windows</div>
<div class="t" style="left:1073.00px;top:676.99px;font-size:14.9px;color:rgba(110,110,110,.4);font-weight:400;;transform:scaleX(1.0013);transform-origin:left">Go to Settings to activate Windows.</div>
<svg style="position:absolute;left:595px;top:630px;opacity:.1" width="175" height="60" viewBox="0 0 175 60"><g fill="none" stroke="#000" stroke-width="6.8" stroke-linecap="round"><path d="M33.9 11V42.5"/><path d="M22 27.6A11.4 11.4 0 1 0 33.4 39"/><circle cx="60.3" cy="34.6" r="10.9"/><path d="M33.9 43H142.5"/><path d="M89.7 35V42M104.4 35.5V42M116.6 33V42M128.7 30.5V42"/><circle cx="154.4" cy="39.4" r="11.3"/></g><g fill="#000"><circle cx="55.1" cy="12.2" r="4.8"/><circle cx="66" cy="11.5" r="4.8"/><circle cx="83.9" cy="21.1" r="4.8"/><circle cx="95.4" cy="21.8" r="4.8"/></g></svg>
<div class="t" style="left:600.80px;top:683.78px;font-size:26.6px;color:rgba(0,0,0,0.1);font-weight:700;;transform:scaleX(0.9990);transform-origin:left">mostaql.com</div>
</body></html>
